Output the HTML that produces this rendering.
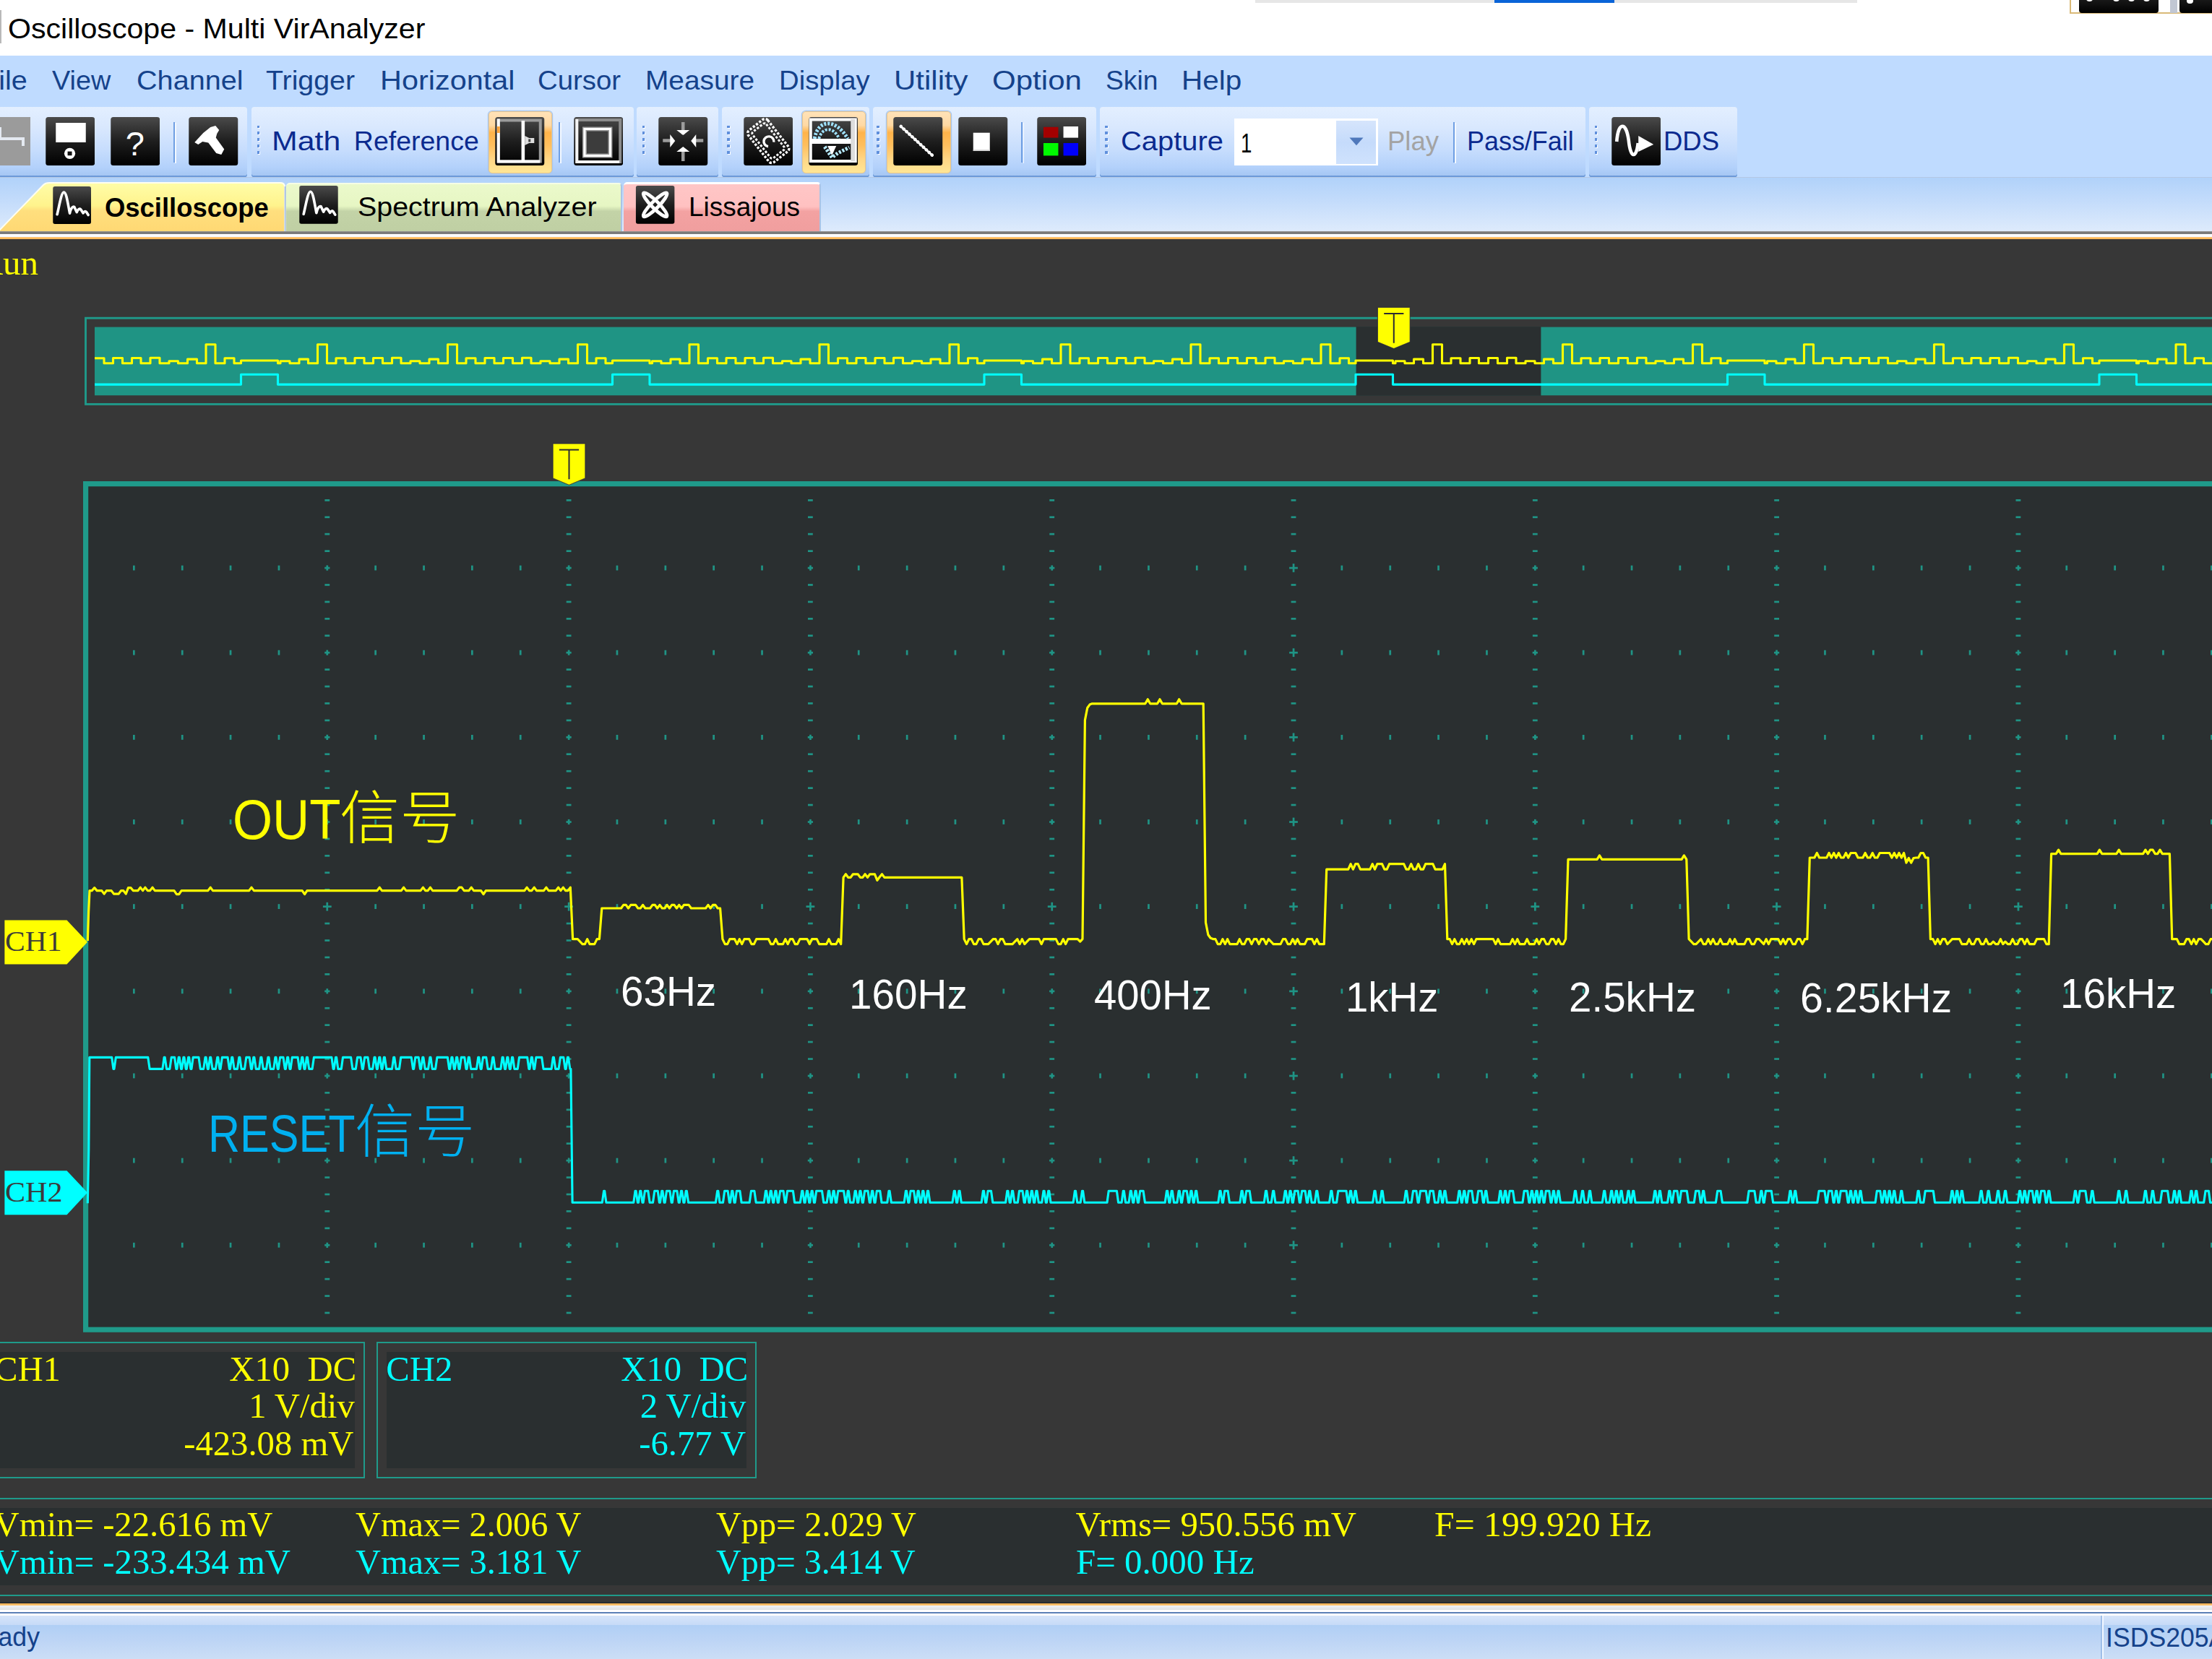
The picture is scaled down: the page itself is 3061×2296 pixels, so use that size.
<!DOCTYPE html>
<html lang="en"><head><meta charset="utf-8"><title>Oscilloscope - Multi VirAnalyzer</title>
<style>
html,body{margin:0;padding:0}
body{width:3061px;height:2296px;overflow:hidden;background:#373737;position:relative}
#app{position:absolute;left:0;top:0;width:3061px;height:2296px;overflow:hidden}
#app div,#app svg.ic{position:absolute}
.t{position:absolute;white-space:pre;line-height:1;transform-origin:0 0;display:block}
.ts{font-family:"Liberation Sans","Noto Sans CJK SC",sans-serif}
.tf{font-family:"Liberation Serif","Noto Serif CJK SC",serif}
.tc{font-family:"Liberation Sans","Noto Sans CJK SC",sans-serif}
.tg{border-radius:4px;background:linear-gradient(#e3efff,#d9e8fe 30%,#c7ddfd 62%,#b3d1fb 88%,#a5c6f3);box-shadow:0 2.6px 0 #6c9ad9}
.hot{border-radius:5px;border:1.6px solid #e8c58d;box-sizing:border-box;
 background:linear-gradient(#ffe2b8,#ffd9a3 22%,#ffb34a 34%,#ffbf5e 55%,#ffd685 78%,#ffe695);box-shadow:0 0 0 1.2px #a9c7ee}
</style></head>
<body><div id="app">
<div class="view" style="left:0.0px;top:331.4px;width:3061.0px;height:1888.0px;background:#373737"></div>
<svg class="ic" style="left:0;top:0" width="3061" height="2296" viewBox="0 0 3061 2296"><defs><linearGradient id="ig" x1="0" y1="0" x2="0" y2="1"><stop offset="0" stop-color="#4a4a4a"/><stop offset=".5" stop-color="#1e1e1e"/><stop offset="1" stop-color="#000"/></linearGradient></defs><rect x="118.5" y="440.2" width="3000" height="119.2" fill="none" stroke="#1f9a8a" stroke-width="2.9"/><rect x="131" y="452.6" width="3000" height="94.6" fill="#1f9484"/><rect x="1876.6" y="452.1" width="255.8" height="95.6" fill="#2a2f30"/><path d="M131.0 495.8L144.0 495.8L144.0 502.8L156.5 502.8L156.5 495.5L169.5 495.5L169.5 502.8L182.5 502.8L182.5 495.5L195.0 495.5L195.0 502.8L208.0 502.8L208.0 495.3L221.0 495.3L221.0 502.8L234.0 502.8L234.0 499.8L246.5 499.8L246.5 502.8L259.5 502.8L259.5 497.1L272.5 497.1L272.5 502.8L285.0 502.8L285.0 476.8L298.0 476.8L298.0 502.8L311.0 502.8L311.0 495.8L324.0 495.8L324.0 502.8L333.5 502.8L333.5 499.0L384.5 499.0L384.5 502.8L388.0 502.8L388.0 499.8L401.0 499.8L401.0 502.8L414.0 502.8L414.0 497.1L426.5 497.1L426.5 502.8L439.5 502.8L439.5 476.8L452.5 476.8L452.5 502.8L465.0 502.8L465.0 495.8L478.0 495.8L478.0 502.8L491.0 502.8L491.0 495.5L504.0 495.5L504.0 502.8L516.5 502.8L516.5 495.5L529.5 495.5L529.5 502.8L542.5 502.8L542.5 495.3L555.0 495.3L555.0 502.8L568.0 502.8L568.0 499.8L581.0 499.8L581.0 502.8L594.0 502.8L594.0 497.1L606.5 497.1L606.5 502.8L619.5 502.8L619.5 476.8L632.5 476.8L632.5 502.8L645.0 502.8L645.0 495.8L658.0 495.8L658.0 502.8L671.0 502.8L671.0 495.5L684.0 495.5L684.0 502.8L696.5 502.8L696.5 495.5L709.5 495.5L709.5 502.8L722.5 502.8L722.5 495.3L735.0 495.3L735.0 502.8L748.0 502.8L748.0 499.8L761.0 499.8L761.0 502.8L774.0 502.8L774.0 497.1L786.5 497.1L786.5 502.8L799.5 502.8L799.5 476.8L812.5 476.8L812.5 502.8L825.0 502.8L825.0 495.8L838.0 495.8L838.0 502.8L847.5 502.8L847.5 499.0L899.0 499.0L899.0 502.8L902.5 502.8L902.5 499.8L915.0 499.8L915.0 502.8L928.0 502.8L928.0 497.1L941.0 497.1L941.0 502.8L954.0 502.8L954.0 476.8L966.5 476.8L966.5 502.8L979.5 502.8L979.5 495.8L992.5 495.8L992.5 502.8L1005.0 502.8L1005.0 495.5L1018.0 495.5L1018.0 502.8L1031.0 502.8L1031.0 495.5L1044.0 495.5L1044.0 502.8L1056.5 502.8L1056.5 495.3L1069.5 495.3L1069.5 502.8L1082.5 502.8L1082.5 499.8L1095.0 499.8L1095.0 502.8L1108.0 502.8L1108.0 497.1L1121.0 497.1L1121.0 502.8L1134.0 502.8L1134.0 476.8L1146.5 476.8L1146.5 502.8L1159.5 502.8L1159.5 495.8L1172.5 495.8L1172.5 502.8L1185.0 502.8L1185.0 495.5L1198.0 495.5L1198.0 502.8L1211.0 502.8L1211.0 495.5L1224.0 495.5L1224.0 502.8L1236.5 502.8L1236.5 495.3L1249.5 495.3L1249.5 502.8L1262.5 502.8L1262.5 499.8L1275.5 499.8L1275.5 502.8L1288.0 502.8L1288.0 497.1L1301.0 497.1L1301.0 502.8L1314.0 502.8L1314.0 476.8L1326.5 476.8L1326.5 502.8L1339.5 502.8L1339.5 495.8L1352.5 495.8L1352.5 502.8L1362.0 502.8L1362.0 499.0L1413.5 499.0L1413.5 502.8L1416.5 502.8L1416.5 499.8L1429.5 499.8L1429.5 502.8L1442.5 502.8L1442.5 497.1L1455.5 497.1L1455.5 502.8L1468.0 502.8L1468.0 476.8L1481.0 476.8L1481.0 502.8L1494.0 502.8L1494.0 495.8L1506.5 495.8L1506.5 502.8L1519.5 502.8L1519.5 495.5L1532.5 495.5L1532.5 502.8L1545.5 502.8L1545.5 495.5L1558.0 495.5L1558.0 502.8L1571.0 502.8L1571.0 495.3L1584.0 495.3L1584.0 502.8L1596.5 502.8L1596.5 499.8L1609.5 499.8L1609.5 502.8L1622.5 502.8L1622.5 497.1L1635.5 497.1L1635.5 502.8L1648.0 502.8L1648.0 476.8L1661.0 476.8L1661.0 502.8L1674.0 502.8L1674.0 495.8L1686.5 495.8L1686.5 502.8L1699.5 502.8L1699.5 495.5L1712.5 495.5L1712.5 502.8L1725.5 502.8L1725.5 495.5L1738.0 495.5L1738.0 502.8L1751.0 502.8L1751.0 495.3L1764.0 495.3L1764.0 502.8L1776.5 502.8L1776.5 499.8L1789.5 499.8L1789.5 502.8L1802.5 502.8L1802.5 497.1L1815.5 497.1L1815.5 502.8L1828.0 502.8L1828.0 476.8L1841.0 476.8L1841.0 502.8L1854.0 502.8L1854.0 495.8L1866.5 495.8L1866.5 502.8L1876.0 502.8L1876.0 499.0L1927.5 499.0L1927.5 502.8L1931.0 502.8L1931.0 499.8L1944.0 499.8L1944.0 502.8L1956.5 502.8L1956.5 497.1L1969.5 497.1L1969.5 502.8L1982.5 502.8L1982.5 476.8L1995.5 476.8L1995.5 502.8L2008.0 502.8L2008.0 495.8L2021.0 495.8L2021.0 502.8L2034.0 502.8L2034.0 495.5L2046.5 495.5L2046.5 502.8L2059.5 502.8L2059.5 495.5L2072.5 495.5L2072.5 502.8L2085.5 502.8L2085.5 495.3L2098.0 495.3L2098.0 502.8L2111.0 502.8L2111.0 499.8L2124.0 499.8L2124.0 502.8L2136.5 502.8L2136.5 497.1L2149.5 497.1L2149.5 502.8L2162.5 502.8L2162.5 476.8L2175.5 476.8L2175.5 502.8L2188.0 502.8L2188.0 495.8L2201.0 495.8L2201.0 502.8L2214.0 502.8L2214.0 495.5L2226.5 495.5L2226.5 502.8L2239.5 502.8L2239.5 495.5L2252.5 495.5L2252.5 502.8L2265.5 502.8L2265.5 495.3L2278.0 495.3L2278.0 502.8L2291.0 502.8L2291.0 499.8L2304.0 499.8L2304.0 502.8L2316.5 502.8L2316.5 497.1L2329.5 497.1L2329.5 502.8L2342.5 502.8L2342.5 476.8L2355.5 476.8L2355.5 502.8L2368.0 502.8L2368.0 495.8L2381.0 495.8L2381.0 502.8L2390.5 502.8L2390.5 499.0L2442.0 499.0L2442.0 502.8L2445.5 502.8L2445.5 499.8L2458.0 499.8L2458.0 502.8L2471.0 502.8L2471.0 497.1L2484.0 497.1L2484.0 502.8L2496.5 502.8L2496.5 476.8L2509.5 476.8L2509.5 502.8L2522.5 502.8L2522.5 495.8L2535.5 495.8L2535.5 502.8L2548.0 502.8L2548.0 495.5L2561.0 495.5L2561.0 502.8L2574.0 502.8L2574.0 495.5L2586.5 495.5L2586.5 502.8L2599.5 502.8L2599.5 495.3L2612.5 495.3L2612.5 502.8L2625.5 502.8L2625.5 499.8L2638.0 499.8L2638.0 502.8L2651.0 502.8L2651.0 497.1L2664.0 497.1L2664.0 502.8L2676.5 502.8L2676.5 476.8L2689.5 476.8L2689.5 502.8L2702.5 502.8L2702.5 495.8L2715.5 495.8L2715.5 502.8L2728.0 502.8L2728.0 495.5L2741.0 495.5L2741.0 502.8L2754.0 502.8L2754.0 495.5L2766.5 495.5L2766.5 502.8L2779.5 502.8L2779.5 495.3L2792.5 495.3L2792.5 502.8L2805.5 502.8L2805.5 499.8L2818.0 499.8L2818.0 502.8L2831.0 502.8L2831.0 497.1L2844.0 497.1L2844.0 502.8L2856.5 502.8L2856.5 476.8L2869.5 476.8L2869.5 502.8L2882.5 502.8L2882.5 495.8L2895.5 495.8L2895.5 502.8L2905.0 502.8L2905.0 499.0L2956.5 499.0L2956.5 502.8L2959.5 502.8L2959.5 499.8L2972.5 499.8L2972.5 502.8L2985.5 502.8L2985.5 497.1L2998.0 497.1L2998.0 502.8L3011.0 502.8L3011.0 476.8L3024.0 476.8L3024.0 502.8L3037.0 502.8L3037.0 495.8L3049.5 495.8L3049.5 502.8L3062.5 502.8L3062.5 495.5L3065.0 495.5" fill="none" stroke="#ffff00" stroke-width="3.1" stroke-linejoin="round"/><path d="M131.0 532.1L333.5 532.1L333.5 518.2L384.5 518.2L384.5 532.1L847.5 532.1L847.5 518.2L899.0 518.2L899.0 532.1L1362.0 532.1L1362.0 518.2L1413.5 518.2L1413.5 532.1L1876.0 532.1L1876.0 518.2L1927.5 518.2L1927.5 532.1L2390.5 532.1L2390.5 518.2L2442.0 518.2L2442.0 532.1L2905.0 532.1L2905.0 518.2L2956.5 518.2L2956.5 532.1L3065.0 532.1" fill="none" stroke="#00ffff" stroke-width="3.1" stroke-linejoin="round"/><path d="M1906.4 425.3H1951.2V473.3L1928.8 482.6L1906.4 473.3Z" fill="#ffff00" stroke="#26263c" stroke-width="1.2" stroke-opacity=".75"/><path d="M1915.2 433.9H1942.4M1928.8 433.9V474.7" stroke="#2b2b33" stroke-width="2.0" fill="none"/><rect x="118.6" y="669.6" width="3000" height="1170.6" fill="#2a2f30" stroke="#1f9a8a" stroke-width="7.2"/><g fill="#1f9485"><rect x="449.4" y="691.0" width="6.8" height="2.7"/><rect x="449.4" y="714.4" width="6.8" height="2.7"/><rect x="449.4" y="737.8" width="6.8" height="2.7"/><rect x="449.4" y="761.3" width="6.8" height="2.7"/><rect x="449.4" y="808.1" width="6.8" height="2.7"/><rect x="449.4" y="831.6" width="6.8" height="2.7"/><rect x="449.4" y="855.0" width="6.8" height="2.7"/><rect x="449.4" y="878.4" width="6.8" height="2.7"/><rect x="449.4" y="925.3" width="6.8" height="2.7"/><rect x="449.4" y="948.7" width="6.8" height="2.7"/><rect x="449.4" y="972.1" width="6.8" height="2.7"/><rect x="449.4" y="995.6" width="6.8" height="2.7"/><rect x="449.4" y="1042.4" width="6.8" height="2.7"/><rect x="449.4" y="1065.9" width="6.8" height="2.7"/><rect x="449.4" y="1089.3" width="6.8" height="2.7"/><rect x="449.4" y="1112.7" width="6.8" height="2.7"/><rect x="449.4" y="1159.6" width="6.8" height="2.7"/><rect x="449.4" y="1183.0" width="6.8" height="2.7"/><rect x="449.4" y="1206.4" width="6.8" height="2.7"/><rect x="449.4" y="1229.9" width="6.8" height="2.7"/><rect x="449.4" y="1276.7" width="6.8" height="2.7"/><rect x="449.4" y="1300.2" width="6.8" height="2.7"/><rect x="449.4" y="1323.6" width="6.8" height="2.7"/><rect x="449.4" y="1347.0" width="6.8" height="2.7"/><rect x="449.4" y="1393.9" width="6.8" height="2.7"/><rect x="449.4" y="1417.3" width="6.8" height="2.7"/><rect x="449.4" y="1440.7" width="6.8" height="2.7"/><rect x="449.4" y="1464.2" width="6.8" height="2.7"/><rect x="449.4" y="1511.0" width="6.8" height="2.7"/><rect x="449.4" y="1534.5" width="6.8" height="2.7"/><rect x="449.4" y="1557.9" width="6.8" height="2.7"/><rect x="449.4" y="1581.3" width="6.8" height="2.7"/><rect x="449.4" y="1628.2" width="6.8" height="2.7"/><rect x="449.4" y="1651.6" width="6.8" height="2.7"/><rect x="449.4" y="1675.0" width="6.8" height="2.7"/><rect x="449.4" y="1698.5" width="6.8" height="2.7"/><rect x="449.4" y="1745.3" width="6.8" height="2.7"/><rect x="449.4" y="1768.8" width="6.8" height="2.7"/><rect x="449.4" y="1792.2" width="6.8" height="2.7"/><rect x="449.4" y="1815.6" width="6.8" height="2.7"/><rect x="783.7" y="691.0" width="6.8" height="2.7"/><rect x="783.7" y="714.4" width="6.8" height="2.7"/><rect x="783.7" y="737.8" width="6.8" height="2.7"/><rect x="783.7" y="761.3" width="6.8" height="2.7"/><rect x="783.7" y="808.1" width="6.8" height="2.7"/><rect x="783.7" y="831.6" width="6.8" height="2.7"/><rect x="783.7" y="855.0" width="6.8" height="2.7"/><rect x="783.7" y="878.4" width="6.8" height="2.7"/><rect x="783.7" y="925.3" width="6.8" height="2.7"/><rect x="783.7" y="948.7" width="6.8" height="2.7"/><rect x="783.7" y="972.1" width="6.8" height="2.7"/><rect x="783.7" y="995.6" width="6.8" height="2.7"/><rect x="783.7" y="1042.4" width="6.8" height="2.7"/><rect x="783.7" y="1065.9" width="6.8" height="2.7"/><rect x="783.7" y="1089.3" width="6.8" height="2.7"/><rect x="783.7" y="1112.7" width="6.8" height="2.7"/><rect x="783.7" y="1159.6" width="6.8" height="2.7"/><rect x="783.7" y="1183.0" width="6.8" height="2.7"/><rect x="783.7" y="1206.4" width="6.8" height="2.7"/><rect x="783.7" y="1229.9" width="6.8" height="2.7"/><rect x="783.7" y="1276.7" width="6.8" height="2.7"/><rect x="783.7" y="1300.2" width="6.8" height="2.7"/><rect x="783.7" y="1323.6" width="6.8" height="2.7"/><rect x="783.7" y="1347.0" width="6.8" height="2.7"/><rect x="783.7" y="1393.9" width="6.8" height="2.7"/><rect x="783.7" y="1417.3" width="6.8" height="2.7"/><rect x="783.7" y="1440.7" width="6.8" height="2.7"/><rect x="783.7" y="1464.2" width="6.8" height="2.7"/><rect x="783.7" y="1511.0" width="6.8" height="2.7"/><rect x="783.7" y="1534.5" width="6.8" height="2.7"/><rect x="783.7" y="1557.9" width="6.8" height="2.7"/><rect x="783.7" y="1581.3" width="6.8" height="2.7"/><rect x="783.7" y="1628.2" width="6.8" height="2.7"/><rect x="783.7" y="1651.6" width="6.8" height="2.7"/><rect x="783.7" y="1675.0" width="6.8" height="2.7"/><rect x="783.7" y="1698.5" width="6.8" height="2.7"/><rect x="783.7" y="1745.3" width="6.8" height="2.7"/><rect x="783.7" y="1768.8" width="6.8" height="2.7"/><rect x="783.7" y="1792.2" width="6.8" height="2.7"/><rect x="783.7" y="1815.6" width="6.8" height="2.7"/><rect x="1118.0" y="691.0" width="6.8" height="2.7"/><rect x="1118.0" y="714.4" width="6.8" height="2.7"/><rect x="1118.0" y="737.8" width="6.8" height="2.7"/><rect x="1118.0" y="761.3" width="6.8" height="2.7"/><rect x="1118.0" y="808.1" width="6.8" height="2.7"/><rect x="1118.0" y="831.6" width="6.8" height="2.7"/><rect x="1118.0" y="855.0" width="6.8" height="2.7"/><rect x="1118.0" y="878.4" width="6.8" height="2.7"/><rect x="1118.0" y="925.3" width="6.8" height="2.7"/><rect x="1118.0" y="948.7" width="6.8" height="2.7"/><rect x="1118.0" y="972.1" width="6.8" height="2.7"/><rect x="1118.0" y="995.6" width="6.8" height="2.7"/><rect x="1118.0" y="1042.4" width="6.8" height="2.7"/><rect x="1118.0" y="1065.9" width="6.8" height="2.7"/><rect x="1118.0" y="1089.3" width="6.8" height="2.7"/><rect x="1118.0" y="1112.7" width="6.8" height="2.7"/><rect x="1118.0" y="1159.6" width="6.8" height="2.7"/><rect x="1118.0" y="1183.0" width="6.8" height="2.7"/><rect x="1118.0" y="1206.4" width="6.8" height="2.7"/><rect x="1118.0" y="1229.9" width="6.8" height="2.7"/><rect x="1118.0" y="1276.7" width="6.8" height="2.7"/><rect x="1118.0" y="1300.2" width="6.8" height="2.7"/><rect x="1118.0" y="1323.6" width="6.8" height="2.7"/><rect x="1118.0" y="1347.0" width="6.8" height="2.7"/><rect x="1118.0" y="1393.9" width="6.8" height="2.7"/><rect x="1118.0" y="1417.3" width="6.8" height="2.7"/><rect x="1118.0" y="1440.7" width="6.8" height="2.7"/><rect x="1118.0" y="1464.2" width="6.8" height="2.7"/><rect x="1118.0" y="1511.0" width="6.8" height="2.7"/><rect x="1118.0" y="1534.5" width="6.8" height="2.7"/><rect x="1118.0" y="1557.9" width="6.8" height="2.7"/><rect x="1118.0" y="1581.3" width="6.8" height="2.7"/><rect x="1118.0" y="1628.2" width="6.8" height="2.7"/><rect x="1118.0" y="1651.6" width="6.8" height="2.7"/><rect x="1118.0" y="1675.0" width="6.8" height="2.7"/><rect x="1118.0" y="1698.5" width="6.8" height="2.7"/><rect x="1118.0" y="1745.3" width="6.8" height="2.7"/><rect x="1118.0" y="1768.8" width="6.8" height="2.7"/><rect x="1118.0" y="1792.2" width="6.8" height="2.7"/><rect x="1118.0" y="1815.6" width="6.8" height="2.7"/><rect x="1452.3" y="691.0" width="6.8" height="2.7"/><rect x="1452.3" y="714.4" width="6.8" height="2.7"/><rect x="1452.3" y="737.8" width="6.8" height="2.7"/><rect x="1452.3" y="761.3" width="6.8" height="2.7"/><rect x="1452.3" y="808.1" width="6.8" height="2.7"/><rect x="1452.3" y="831.6" width="6.8" height="2.7"/><rect x="1452.3" y="855.0" width="6.8" height="2.7"/><rect x="1452.3" y="878.4" width="6.8" height="2.7"/><rect x="1452.3" y="925.3" width="6.8" height="2.7"/><rect x="1452.3" y="948.7" width="6.8" height="2.7"/><rect x="1452.3" y="972.1" width="6.8" height="2.7"/><rect x="1452.3" y="995.6" width="6.8" height="2.7"/><rect x="1452.3" y="1042.4" width="6.8" height="2.7"/><rect x="1452.3" y="1065.9" width="6.8" height="2.7"/><rect x="1452.3" y="1089.3" width="6.8" height="2.7"/><rect x="1452.3" y="1112.7" width="6.8" height="2.7"/><rect x="1452.3" y="1159.6" width="6.8" height="2.7"/><rect x="1452.3" y="1183.0" width="6.8" height="2.7"/><rect x="1452.3" y="1206.4" width="6.8" height="2.7"/><rect x="1452.3" y="1229.9" width="6.8" height="2.7"/><rect x="1452.3" y="1276.7" width="6.8" height="2.7"/><rect x="1452.3" y="1300.2" width="6.8" height="2.7"/><rect x="1452.3" y="1323.6" width="6.8" height="2.7"/><rect x="1452.3" y="1347.0" width="6.8" height="2.7"/><rect x="1452.3" y="1393.9" width="6.8" height="2.7"/><rect x="1452.3" y="1417.3" width="6.8" height="2.7"/><rect x="1452.3" y="1440.7" width="6.8" height="2.7"/><rect x="1452.3" y="1464.2" width="6.8" height="2.7"/><rect x="1452.3" y="1511.0" width="6.8" height="2.7"/><rect x="1452.3" y="1534.5" width="6.8" height="2.7"/><rect x="1452.3" y="1557.9" width="6.8" height="2.7"/><rect x="1452.3" y="1581.3" width="6.8" height="2.7"/><rect x="1452.3" y="1628.2" width="6.8" height="2.7"/><rect x="1452.3" y="1651.6" width="6.8" height="2.7"/><rect x="1452.3" y="1675.0" width="6.8" height="2.7"/><rect x="1452.3" y="1698.5" width="6.8" height="2.7"/><rect x="1452.3" y="1745.3" width="6.8" height="2.7"/><rect x="1452.3" y="1768.8" width="6.8" height="2.7"/><rect x="1452.3" y="1792.2" width="6.8" height="2.7"/><rect x="1452.3" y="1815.6" width="6.8" height="2.7"/><rect x="1786.6" y="691.0" width="6.8" height="2.7"/><rect x="1786.6" y="714.4" width="6.8" height="2.7"/><rect x="1786.6" y="737.8" width="6.8" height="2.7"/><rect x="1786.6" y="761.3" width="6.8" height="2.7"/><rect x="1786.6" y="808.1" width="6.8" height="2.7"/><rect x="1786.6" y="831.6" width="6.8" height="2.7"/><rect x="1786.6" y="855.0" width="6.8" height="2.7"/><rect x="1786.6" y="878.4" width="6.8" height="2.7"/><rect x="1786.6" y="925.3" width="6.8" height="2.7"/><rect x="1786.6" y="948.7" width="6.8" height="2.7"/><rect x="1786.6" y="972.1" width="6.8" height="2.7"/><rect x="1786.6" y="995.6" width="6.8" height="2.7"/><rect x="1786.6" y="1042.4" width="6.8" height="2.7"/><rect x="1786.6" y="1065.9" width="6.8" height="2.7"/><rect x="1786.6" y="1089.3" width="6.8" height="2.7"/><rect x="1786.6" y="1112.7" width="6.8" height="2.7"/><rect x="1786.6" y="1159.6" width="6.8" height="2.7"/><rect x="1786.6" y="1183.0" width="6.8" height="2.7"/><rect x="1786.6" y="1206.4" width="6.8" height="2.7"/><rect x="1786.6" y="1229.9" width="6.8" height="2.7"/><rect x="1786.6" y="1276.7" width="6.8" height="2.7"/><rect x="1786.6" y="1300.2" width="6.8" height="2.7"/><rect x="1786.6" y="1323.6" width="6.8" height="2.7"/><rect x="1786.6" y="1347.0" width="6.8" height="2.7"/><rect x="1786.6" y="1393.9" width="6.8" height="2.7"/><rect x="1786.6" y="1417.3" width="6.8" height="2.7"/><rect x="1786.6" y="1440.7" width="6.8" height="2.7"/><rect x="1786.6" y="1464.2" width="6.8" height="2.7"/><rect x="1786.6" y="1511.0" width="6.8" height="2.7"/><rect x="1786.6" y="1534.5" width="6.8" height="2.7"/><rect x="1786.6" y="1557.9" width="6.8" height="2.7"/><rect x="1786.6" y="1581.3" width="6.8" height="2.7"/><rect x="1786.6" y="1628.2" width="6.8" height="2.7"/><rect x="1786.6" y="1651.6" width="6.8" height="2.7"/><rect x="1786.6" y="1675.0" width="6.8" height="2.7"/><rect x="1786.6" y="1698.5" width="6.8" height="2.7"/><rect x="1786.6" y="1745.3" width="6.8" height="2.7"/><rect x="1786.6" y="1768.8" width="6.8" height="2.7"/><rect x="1786.6" y="1792.2" width="6.8" height="2.7"/><rect x="1786.6" y="1815.6" width="6.8" height="2.7"/><rect x="2120.9" y="691.0" width="6.8" height="2.7"/><rect x="2120.9" y="714.4" width="6.8" height="2.7"/><rect x="2120.9" y="737.8" width="6.8" height="2.7"/><rect x="2120.9" y="761.3" width="6.8" height="2.7"/><rect x="2120.9" y="808.1" width="6.8" height="2.7"/><rect x="2120.9" y="831.6" width="6.8" height="2.7"/><rect x="2120.9" y="855.0" width="6.8" height="2.7"/><rect x="2120.9" y="878.4" width="6.8" height="2.7"/><rect x="2120.9" y="925.3" width="6.8" height="2.7"/><rect x="2120.9" y="948.7" width="6.8" height="2.7"/><rect x="2120.9" y="972.1" width="6.8" height="2.7"/><rect x="2120.9" y="995.6" width="6.8" height="2.7"/><rect x="2120.9" y="1042.4" width="6.8" height="2.7"/><rect x="2120.9" y="1065.9" width="6.8" height="2.7"/><rect x="2120.9" y="1089.3" width="6.8" height="2.7"/><rect x="2120.9" y="1112.7" width="6.8" height="2.7"/><rect x="2120.9" y="1159.6" width="6.8" height="2.7"/><rect x="2120.9" y="1183.0" width="6.8" height="2.7"/><rect x="2120.9" y="1206.4" width="6.8" height="2.7"/><rect x="2120.9" y="1229.9" width="6.8" height="2.7"/><rect x="2120.9" y="1276.7" width="6.8" height="2.7"/><rect x="2120.9" y="1300.2" width="6.8" height="2.7"/><rect x="2120.9" y="1323.6" width="6.8" height="2.7"/><rect x="2120.9" y="1347.0" width="6.8" height="2.7"/><rect x="2120.9" y="1393.9" width="6.8" height="2.7"/><rect x="2120.9" y="1417.3" width="6.8" height="2.7"/><rect x="2120.9" y="1440.7" width="6.8" height="2.7"/><rect x="2120.9" y="1464.2" width="6.8" height="2.7"/><rect x="2120.9" y="1511.0" width="6.8" height="2.7"/><rect x="2120.9" y="1534.5" width="6.8" height="2.7"/><rect x="2120.9" y="1557.9" width="6.8" height="2.7"/><rect x="2120.9" y="1581.3" width="6.8" height="2.7"/><rect x="2120.9" y="1628.2" width="6.8" height="2.7"/><rect x="2120.9" y="1651.6" width="6.8" height="2.7"/><rect x="2120.9" y="1675.0" width="6.8" height="2.7"/><rect x="2120.9" y="1698.5" width="6.8" height="2.7"/><rect x="2120.9" y="1745.3" width="6.8" height="2.7"/><rect x="2120.9" y="1768.8" width="6.8" height="2.7"/><rect x="2120.9" y="1792.2" width="6.8" height="2.7"/><rect x="2120.9" y="1815.6" width="6.8" height="2.7"/><rect x="2455.2" y="691.0" width="6.8" height="2.7"/><rect x="2455.2" y="714.4" width="6.8" height="2.7"/><rect x="2455.2" y="737.8" width="6.8" height="2.7"/><rect x="2455.2" y="761.3" width="6.8" height="2.7"/><rect x="2455.2" y="808.1" width="6.8" height="2.7"/><rect x="2455.2" y="831.6" width="6.8" height="2.7"/><rect x="2455.2" y="855.0" width="6.8" height="2.7"/><rect x="2455.2" y="878.4" width="6.8" height="2.7"/><rect x="2455.2" y="925.3" width="6.8" height="2.7"/><rect x="2455.2" y="948.7" width="6.8" height="2.7"/><rect x="2455.2" y="972.1" width="6.8" height="2.7"/><rect x="2455.2" y="995.6" width="6.8" height="2.7"/><rect x="2455.2" y="1042.4" width="6.8" height="2.7"/><rect x="2455.2" y="1065.9" width="6.8" height="2.7"/><rect x="2455.2" y="1089.3" width="6.8" height="2.7"/><rect x="2455.2" y="1112.7" width="6.8" height="2.7"/><rect x="2455.2" y="1159.6" width="6.8" height="2.7"/><rect x="2455.2" y="1183.0" width="6.8" height="2.7"/><rect x="2455.2" y="1206.4" width="6.8" height="2.7"/><rect x="2455.2" y="1229.9" width="6.8" height="2.7"/><rect x="2455.2" y="1276.7" width="6.8" height="2.7"/><rect x="2455.2" y="1300.2" width="6.8" height="2.7"/><rect x="2455.2" y="1323.6" width="6.8" height="2.7"/><rect x="2455.2" y="1347.0" width="6.8" height="2.7"/><rect x="2455.2" y="1393.9" width="6.8" height="2.7"/><rect x="2455.2" y="1417.3" width="6.8" height="2.7"/><rect x="2455.2" y="1440.7" width="6.8" height="2.7"/><rect x="2455.2" y="1464.2" width="6.8" height="2.7"/><rect x="2455.2" y="1511.0" width="6.8" height="2.7"/><rect x="2455.2" y="1534.5" width="6.8" height="2.7"/><rect x="2455.2" y="1557.9" width="6.8" height="2.7"/><rect x="2455.2" y="1581.3" width="6.8" height="2.7"/><rect x="2455.2" y="1628.2" width="6.8" height="2.7"/><rect x="2455.2" y="1651.6" width="6.8" height="2.7"/><rect x="2455.2" y="1675.0" width="6.8" height="2.7"/><rect x="2455.2" y="1698.5" width="6.8" height="2.7"/><rect x="2455.2" y="1745.3" width="6.8" height="2.7"/><rect x="2455.2" y="1768.8" width="6.8" height="2.7"/><rect x="2455.2" y="1792.2" width="6.8" height="2.7"/><rect x="2455.2" y="1815.6" width="6.8" height="2.7"/><rect x="2789.5" y="691.0" width="6.8" height="2.7"/><rect x="2789.5" y="714.4" width="6.8" height="2.7"/><rect x="2789.5" y="737.8" width="6.8" height="2.7"/><rect x="2789.5" y="761.3" width="6.8" height="2.7"/><rect x="2789.5" y="808.1" width="6.8" height="2.7"/><rect x="2789.5" y="831.6" width="6.8" height="2.7"/><rect x="2789.5" y="855.0" width="6.8" height="2.7"/><rect x="2789.5" y="878.4" width="6.8" height="2.7"/><rect x="2789.5" y="925.3" width="6.8" height="2.7"/><rect x="2789.5" y="948.7" width="6.8" height="2.7"/><rect x="2789.5" y="972.1" width="6.8" height="2.7"/><rect x="2789.5" y="995.6" width="6.8" height="2.7"/><rect x="2789.5" y="1042.4" width="6.8" height="2.7"/><rect x="2789.5" y="1065.9" width="6.8" height="2.7"/><rect x="2789.5" y="1089.3" width="6.8" height="2.7"/><rect x="2789.5" y="1112.7" width="6.8" height="2.7"/><rect x="2789.5" y="1159.6" width="6.8" height="2.7"/><rect x="2789.5" y="1183.0" width="6.8" height="2.7"/><rect x="2789.5" y="1206.4" width="6.8" height="2.7"/><rect x="2789.5" y="1229.9" width="6.8" height="2.7"/><rect x="2789.5" y="1276.7" width="6.8" height="2.7"/><rect x="2789.5" y="1300.2" width="6.8" height="2.7"/><rect x="2789.5" y="1323.6" width="6.8" height="2.7"/><rect x="2789.5" y="1347.0" width="6.8" height="2.7"/><rect x="2789.5" y="1393.9" width="6.8" height="2.7"/><rect x="2789.5" y="1417.3" width="6.8" height="2.7"/><rect x="2789.5" y="1440.7" width="6.8" height="2.7"/><rect x="2789.5" y="1464.2" width="6.8" height="2.7"/><rect x="2789.5" y="1511.0" width="6.8" height="2.7"/><rect x="2789.5" y="1534.5" width="6.8" height="2.7"/><rect x="2789.5" y="1557.9" width="6.8" height="2.7"/><rect x="2789.5" y="1581.3" width="6.8" height="2.7"/><rect x="2789.5" y="1628.2" width="6.8" height="2.7"/><rect x="2789.5" y="1651.6" width="6.8" height="2.7"/><rect x="2789.5" y="1675.0" width="6.8" height="2.7"/><rect x="2789.5" y="1698.5" width="6.8" height="2.7"/><rect x="2789.5" y="1745.3" width="6.8" height="2.7"/><rect x="2789.5" y="1768.8" width="6.8" height="2.7"/><rect x="2789.5" y="1792.2" width="6.8" height="2.7"/><rect x="2789.5" y="1815.6" width="6.8" height="2.7"/><rect x="184.0" y="782.6" width="2.7" height="6.8"/><rect x="250.9" y="782.6" width="2.7" height="6.8"/><rect x="317.7" y="782.6" width="2.7" height="6.8"/><rect x="384.6" y="782.6" width="2.7" height="6.8"/><rect x="449.2" y="784.7" width="7.2" height="2.7"/><rect x="451.4" y="782.4" width="2.7" height="7.2"/><rect x="518.3" y="782.6" width="2.7" height="6.8"/><rect x="585.2" y="782.6" width="2.7" height="6.8"/><rect x="652.0" y="782.6" width="2.7" height="6.8"/><rect x="718.9" y="782.6" width="2.7" height="6.8"/><rect x="783.5" y="784.7" width="7.2" height="2.7"/><rect x="785.8" y="782.4" width="2.7" height="7.2"/><rect x="852.6" y="782.6" width="2.7" height="6.8"/><rect x="919.5" y="782.6" width="2.7" height="6.8"/><rect x="986.3" y="782.6" width="2.7" height="6.8"/><rect x="1053.2" y="782.6" width="2.7" height="6.8"/><rect x="1117.8" y="784.7" width="7.2" height="2.7"/><rect x="1120.1" y="782.4" width="2.7" height="7.2"/><rect x="1186.9" y="782.6" width="2.7" height="6.8"/><rect x="1253.8" y="782.6" width="2.7" height="6.8"/><rect x="1320.6" y="782.6" width="2.7" height="6.8"/><rect x="1387.5" y="782.6" width="2.7" height="6.8"/><rect x="1452.1" y="784.7" width="7.2" height="2.7"/><rect x="1454.4" y="782.4" width="2.7" height="7.2"/><rect x="1521.2" y="782.6" width="2.7" height="6.8"/><rect x="1588.1" y="782.6" width="2.7" height="6.8"/><rect x="1654.9" y="782.6" width="2.7" height="6.8"/><rect x="1721.8" y="782.6" width="2.7" height="6.8"/><rect x="1784.1" y="784.7" width="11.8" height="2.7"/><rect x="1788.7" y="780.1" width="2.7" height="11.8"/><rect x="1855.5" y="782.6" width="2.7" height="6.8"/><rect x="1922.4" y="782.6" width="2.7" height="6.8"/><rect x="1989.2" y="782.6" width="2.7" height="6.8"/><rect x="2056.1" y="782.6" width="2.7" height="6.8"/><rect x="2120.7" y="784.7" width="7.2" height="2.7"/><rect x="2123.0" y="782.4" width="2.7" height="7.2"/><rect x="2189.8" y="782.6" width="2.7" height="6.8"/><rect x="2256.7" y="782.6" width="2.7" height="6.8"/><rect x="2323.5" y="782.6" width="2.7" height="6.8"/><rect x="2390.4" y="782.6" width="2.7" height="6.8"/><rect x="2455.0" y="784.7" width="7.2" height="2.7"/><rect x="2457.2" y="782.4" width="2.7" height="7.2"/><rect x="2524.1" y="782.6" width="2.7" height="6.8"/><rect x="2591.0" y="782.6" width="2.7" height="6.8"/><rect x="2657.8" y="782.6" width="2.7" height="6.8"/><rect x="2724.7" y="782.6" width="2.7" height="6.8"/><rect x="2789.3" y="784.7" width="7.2" height="2.7"/><rect x="2791.6" y="782.4" width="2.7" height="7.2"/><rect x="2858.4" y="782.6" width="2.7" height="6.8"/><rect x="2925.3" y="782.6" width="2.7" height="6.8"/><rect x="2992.1" y="782.6" width="2.7" height="6.8"/><rect x="3059.0" y="782.6" width="2.7" height="6.8"/><rect x="184.0" y="899.8" width="2.7" height="6.8"/><rect x="250.9" y="899.8" width="2.7" height="6.8"/><rect x="317.7" y="899.8" width="2.7" height="6.8"/><rect x="384.6" y="899.8" width="2.7" height="6.8"/><rect x="449.2" y="901.9" width="7.2" height="2.7"/><rect x="451.4" y="899.6" width="2.7" height="7.2"/><rect x="518.3" y="899.8" width="2.7" height="6.8"/><rect x="585.2" y="899.8" width="2.7" height="6.8"/><rect x="652.0" y="899.8" width="2.7" height="6.8"/><rect x="718.9" y="899.8" width="2.7" height="6.8"/><rect x="783.5" y="901.9" width="7.2" height="2.7"/><rect x="785.8" y="899.6" width="2.7" height="7.2"/><rect x="852.6" y="899.8" width="2.7" height="6.8"/><rect x="919.5" y="899.8" width="2.7" height="6.8"/><rect x="986.3" y="899.8" width="2.7" height="6.8"/><rect x="1053.2" y="899.8" width="2.7" height="6.8"/><rect x="1117.8" y="901.9" width="7.2" height="2.7"/><rect x="1120.1" y="899.6" width="2.7" height="7.2"/><rect x="1186.9" y="899.8" width="2.7" height="6.8"/><rect x="1253.8" y="899.8" width="2.7" height="6.8"/><rect x="1320.6" y="899.8" width="2.7" height="6.8"/><rect x="1387.5" y="899.8" width="2.7" height="6.8"/><rect x="1452.1" y="901.9" width="7.2" height="2.7"/><rect x="1454.4" y="899.6" width="2.7" height="7.2"/><rect x="1521.2" y="899.8" width="2.7" height="6.8"/><rect x="1588.1" y="899.8" width="2.7" height="6.8"/><rect x="1654.9" y="899.8" width="2.7" height="6.8"/><rect x="1721.8" y="899.8" width="2.7" height="6.8"/><rect x="1784.1" y="901.9" width="11.8" height="2.7"/><rect x="1788.7" y="897.3" width="2.7" height="11.8"/><rect x="1855.5" y="899.8" width="2.7" height="6.8"/><rect x="1922.4" y="899.8" width="2.7" height="6.8"/><rect x="1989.2" y="899.8" width="2.7" height="6.8"/><rect x="2056.1" y="899.8" width="2.7" height="6.8"/><rect x="2120.7" y="901.9" width="7.2" height="2.7"/><rect x="2123.0" y="899.6" width="2.7" height="7.2"/><rect x="2189.8" y="899.8" width="2.7" height="6.8"/><rect x="2256.7" y="899.8" width="2.7" height="6.8"/><rect x="2323.5" y="899.8" width="2.7" height="6.8"/><rect x="2390.4" y="899.8" width="2.7" height="6.8"/><rect x="2455.0" y="901.9" width="7.2" height="2.7"/><rect x="2457.2" y="899.6" width="2.7" height="7.2"/><rect x="2524.1" y="899.8" width="2.7" height="6.8"/><rect x="2591.0" y="899.8" width="2.7" height="6.8"/><rect x="2657.8" y="899.8" width="2.7" height="6.8"/><rect x="2724.7" y="899.8" width="2.7" height="6.8"/><rect x="2789.3" y="901.9" width="7.2" height="2.7"/><rect x="2791.6" y="899.6" width="2.7" height="7.2"/><rect x="2858.4" y="899.8" width="2.7" height="6.8"/><rect x="2925.3" y="899.8" width="2.7" height="6.8"/><rect x="2992.1" y="899.8" width="2.7" height="6.8"/><rect x="3059.0" y="899.8" width="2.7" height="6.8"/><rect x="184.0" y="1017.0" width="2.7" height="6.8"/><rect x="250.9" y="1017.0" width="2.7" height="6.8"/><rect x="317.7" y="1017.0" width="2.7" height="6.8"/><rect x="384.6" y="1017.0" width="2.7" height="6.8"/><rect x="449.2" y="1019.0" width="7.2" height="2.7"/><rect x="451.4" y="1016.8" width="2.7" height="7.2"/><rect x="518.3" y="1017.0" width="2.7" height="6.8"/><rect x="585.2" y="1017.0" width="2.7" height="6.8"/><rect x="652.0" y="1017.0" width="2.7" height="6.8"/><rect x="718.9" y="1017.0" width="2.7" height="6.8"/><rect x="783.5" y="1019.0" width="7.2" height="2.7"/><rect x="785.8" y="1016.8" width="2.7" height="7.2"/><rect x="852.6" y="1017.0" width="2.7" height="6.8"/><rect x="919.5" y="1017.0" width="2.7" height="6.8"/><rect x="986.3" y="1017.0" width="2.7" height="6.8"/><rect x="1053.2" y="1017.0" width="2.7" height="6.8"/><rect x="1117.8" y="1019.0" width="7.2" height="2.7"/><rect x="1120.1" y="1016.8" width="2.7" height="7.2"/><rect x="1186.9" y="1017.0" width="2.7" height="6.8"/><rect x="1253.8" y="1017.0" width="2.7" height="6.8"/><rect x="1320.6" y="1017.0" width="2.7" height="6.8"/><rect x="1387.5" y="1017.0" width="2.7" height="6.8"/><rect x="1452.1" y="1019.0" width="7.2" height="2.7"/><rect x="1454.4" y="1016.8" width="2.7" height="7.2"/><rect x="1521.2" y="1017.0" width="2.7" height="6.8"/><rect x="1588.1" y="1017.0" width="2.7" height="6.8"/><rect x="1654.9" y="1017.0" width="2.7" height="6.8"/><rect x="1721.8" y="1017.0" width="2.7" height="6.8"/><rect x="1784.1" y="1019.0" width="11.8" height="2.7"/><rect x="1788.7" y="1014.5" width="2.7" height="11.8"/><rect x="1855.5" y="1017.0" width="2.7" height="6.8"/><rect x="1922.4" y="1017.0" width="2.7" height="6.8"/><rect x="1989.2" y="1017.0" width="2.7" height="6.8"/><rect x="2056.1" y="1017.0" width="2.7" height="6.8"/><rect x="2120.7" y="1019.0" width="7.2" height="2.7"/><rect x="2123.0" y="1016.8" width="2.7" height="7.2"/><rect x="2189.8" y="1017.0" width="2.7" height="6.8"/><rect x="2256.7" y="1017.0" width="2.7" height="6.8"/><rect x="2323.5" y="1017.0" width="2.7" height="6.8"/><rect x="2390.4" y="1017.0" width="2.7" height="6.8"/><rect x="2455.0" y="1019.0" width="7.2" height="2.7"/><rect x="2457.2" y="1016.8" width="2.7" height="7.2"/><rect x="2524.1" y="1017.0" width="2.7" height="6.8"/><rect x="2591.0" y="1017.0" width="2.7" height="6.8"/><rect x="2657.8" y="1017.0" width="2.7" height="6.8"/><rect x="2724.7" y="1017.0" width="2.7" height="6.8"/><rect x="2789.3" y="1019.0" width="7.2" height="2.7"/><rect x="2791.6" y="1016.8" width="2.7" height="7.2"/><rect x="2858.4" y="1017.0" width="2.7" height="6.8"/><rect x="2925.3" y="1017.0" width="2.7" height="6.8"/><rect x="2992.1" y="1017.0" width="2.7" height="6.8"/><rect x="3059.0" y="1017.0" width="2.7" height="6.8"/><rect x="184.0" y="1134.1" width="2.7" height="6.8"/><rect x="250.9" y="1134.1" width="2.7" height="6.8"/><rect x="317.7" y="1134.1" width="2.7" height="6.8"/><rect x="384.6" y="1134.1" width="2.7" height="6.8"/><rect x="449.2" y="1136.2" width="7.2" height="2.7"/><rect x="451.4" y="1133.9" width="2.7" height="7.2"/><rect x="518.3" y="1134.1" width="2.7" height="6.8"/><rect x="585.2" y="1134.1" width="2.7" height="6.8"/><rect x="652.0" y="1134.1" width="2.7" height="6.8"/><rect x="718.9" y="1134.1" width="2.7" height="6.8"/><rect x="783.5" y="1136.2" width="7.2" height="2.7"/><rect x="785.8" y="1133.9" width="2.7" height="7.2"/><rect x="852.6" y="1134.1" width="2.7" height="6.8"/><rect x="919.5" y="1134.1" width="2.7" height="6.8"/><rect x="986.3" y="1134.1" width="2.7" height="6.8"/><rect x="1053.2" y="1134.1" width="2.7" height="6.8"/><rect x="1117.8" y="1136.2" width="7.2" height="2.7"/><rect x="1120.1" y="1133.9" width="2.7" height="7.2"/><rect x="1186.9" y="1134.1" width="2.7" height="6.8"/><rect x="1253.8" y="1134.1" width="2.7" height="6.8"/><rect x="1320.6" y="1134.1" width="2.7" height="6.8"/><rect x="1387.5" y="1134.1" width="2.7" height="6.8"/><rect x="1452.1" y="1136.2" width="7.2" height="2.7"/><rect x="1454.4" y="1133.9" width="2.7" height="7.2"/><rect x="1521.2" y="1134.1" width="2.7" height="6.8"/><rect x="1588.1" y="1134.1" width="2.7" height="6.8"/><rect x="1654.9" y="1134.1" width="2.7" height="6.8"/><rect x="1721.8" y="1134.1" width="2.7" height="6.8"/><rect x="1784.1" y="1136.2" width="11.8" height="2.7"/><rect x="1788.7" y="1131.6" width="2.7" height="11.8"/><rect x="1855.5" y="1134.1" width="2.7" height="6.8"/><rect x="1922.4" y="1134.1" width="2.7" height="6.8"/><rect x="1989.2" y="1134.1" width="2.7" height="6.8"/><rect x="2056.1" y="1134.1" width="2.7" height="6.8"/><rect x="2120.7" y="1136.2" width="7.2" height="2.7"/><rect x="2123.0" y="1133.9" width="2.7" height="7.2"/><rect x="2189.8" y="1134.1" width="2.7" height="6.8"/><rect x="2256.7" y="1134.1" width="2.7" height="6.8"/><rect x="2323.5" y="1134.1" width="2.7" height="6.8"/><rect x="2390.4" y="1134.1" width="2.7" height="6.8"/><rect x="2455.0" y="1136.2" width="7.2" height="2.7"/><rect x="2457.2" y="1133.9" width="2.7" height="7.2"/><rect x="2524.1" y="1134.1" width="2.7" height="6.8"/><rect x="2591.0" y="1134.1" width="2.7" height="6.8"/><rect x="2657.8" y="1134.1" width="2.7" height="6.8"/><rect x="2724.7" y="1134.1" width="2.7" height="6.8"/><rect x="2789.3" y="1136.2" width="7.2" height="2.7"/><rect x="2791.6" y="1133.9" width="2.7" height="7.2"/><rect x="2858.4" y="1134.1" width="2.7" height="6.8"/><rect x="2925.3" y="1134.1" width="2.7" height="6.8"/><rect x="2992.1" y="1134.1" width="2.7" height="6.8"/><rect x="3059.0" y="1134.1" width="2.7" height="6.8"/><rect x="184.0" y="1251.2" width="2.7" height="6.8"/><rect x="250.9" y="1251.2" width="2.7" height="6.8"/><rect x="317.7" y="1251.2" width="2.7" height="6.8"/><rect x="384.6" y="1251.2" width="2.7" height="6.8"/><rect x="446.9" y="1253.3" width="11.8" height="2.7"/><rect x="451.4" y="1248.8" width="2.7" height="11.8"/><rect x="518.3" y="1251.2" width="2.7" height="6.8"/><rect x="585.2" y="1251.2" width="2.7" height="6.8"/><rect x="652.0" y="1251.2" width="2.7" height="6.8"/><rect x="718.9" y="1251.2" width="2.7" height="6.8"/><rect x="781.2" y="1253.3" width="11.8" height="2.7"/><rect x="785.8" y="1248.8" width="2.7" height="11.8"/><rect x="852.6" y="1251.2" width="2.7" height="6.8"/><rect x="919.5" y="1251.2" width="2.7" height="6.8"/><rect x="986.3" y="1251.2" width="2.7" height="6.8"/><rect x="1053.2" y="1251.2" width="2.7" height="6.8"/><rect x="1115.5" y="1253.3" width="11.8" height="2.7"/><rect x="1120.1" y="1248.8" width="2.7" height="11.8"/><rect x="1186.9" y="1251.2" width="2.7" height="6.8"/><rect x="1253.8" y="1251.2" width="2.7" height="6.8"/><rect x="1320.6" y="1251.2" width="2.7" height="6.8"/><rect x="1387.5" y="1251.2" width="2.7" height="6.8"/><rect x="1449.8" y="1253.3" width="11.8" height="2.7"/><rect x="1454.4" y="1248.8" width="2.7" height="11.8"/><rect x="1521.2" y="1251.2" width="2.7" height="6.8"/><rect x="1588.1" y="1251.2" width="2.7" height="6.8"/><rect x="1654.9" y="1251.2" width="2.7" height="6.8"/><rect x="1721.8" y="1251.2" width="2.7" height="6.8"/><rect x="1784.1" y="1253.3" width="11.8" height="2.7"/><rect x="1788.7" y="1248.8" width="2.7" height="11.8"/><rect x="1855.5" y="1251.2" width="2.7" height="6.8"/><rect x="1922.4" y="1251.2" width="2.7" height="6.8"/><rect x="1989.2" y="1251.2" width="2.7" height="6.8"/><rect x="2056.1" y="1251.2" width="2.7" height="6.8"/><rect x="2118.4" y="1253.3" width="11.8" height="2.7"/><rect x="2123.0" y="1248.8" width="2.7" height="11.8"/><rect x="2189.8" y="1251.2" width="2.7" height="6.8"/><rect x="2256.7" y="1251.2" width="2.7" height="6.8"/><rect x="2323.5" y="1251.2" width="2.7" height="6.8"/><rect x="2390.4" y="1251.2" width="2.7" height="6.8"/><rect x="2452.7" y="1253.3" width="11.8" height="2.7"/><rect x="2457.2" y="1248.8" width="2.7" height="11.8"/><rect x="2524.1" y="1251.2" width="2.7" height="6.8"/><rect x="2591.0" y="1251.2" width="2.7" height="6.8"/><rect x="2657.8" y="1251.2" width="2.7" height="6.8"/><rect x="2724.7" y="1251.2" width="2.7" height="6.8"/><rect x="2787.0" y="1253.3" width="11.8" height="2.7"/><rect x="2791.6" y="1248.8" width="2.7" height="11.8"/><rect x="2858.4" y="1251.2" width="2.7" height="6.8"/><rect x="2925.3" y="1251.2" width="2.7" height="6.8"/><rect x="2992.1" y="1251.2" width="2.7" height="6.8"/><rect x="3059.0" y="1251.2" width="2.7" height="6.8"/><rect x="184.0" y="1368.4" width="2.7" height="6.8"/><rect x="250.9" y="1368.4" width="2.7" height="6.8"/><rect x="317.7" y="1368.4" width="2.7" height="6.8"/><rect x="384.6" y="1368.4" width="2.7" height="6.8"/><rect x="449.2" y="1370.5" width="7.2" height="2.7"/><rect x="451.4" y="1368.2" width="2.7" height="7.2"/><rect x="518.3" y="1368.4" width="2.7" height="6.8"/><rect x="585.2" y="1368.4" width="2.7" height="6.8"/><rect x="652.0" y="1368.4" width="2.7" height="6.8"/><rect x="718.9" y="1368.4" width="2.7" height="6.8"/><rect x="783.5" y="1370.5" width="7.2" height="2.7"/><rect x="785.8" y="1368.2" width="2.7" height="7.2"/><rect x="852.6" y="1368.4" width="2.7" height="6.8"/><rect x="919.5" y="1368.4" width="2.7" height="6.8"/><rect x="986.3" y="1368.4" width="2.7" height="6.8"/><rect x="1053.2" y="1368.4" width="2.7" height="6.8"/><rect x="1117.8" y="1370.5" width="7.2" height="2.7"/><rect x="1120.1" y="1368.2" width="2.7" height="7.2"/><rect x="1186.9" y="1368.4" width="2.7" height="6.8"/><rect x="1253.8" y="1368.4" width="2.7" height="6.8"/><rect x="1320.6" y="1368.4" width="2.7" height="6.8"/><rect x="1387.5" y="1368.4" width="2.7" height="6.8"/><rect x="1452.1" y="1370.5" width="7.2" height="2.7"/><rect x="1454.4" y="1368.2" width="2.7" height="7.2"/><rect x="1521.2" y="1368.4" width="2.7" height="6.8"/><rect x="1588.1" y="1368.4" width="2.7" height="6.8"/><rect x="1654.9" y="1368.4" width="2.7" height="6.8"/><rect x="1721.8" y="1368.4" width="2.7" height="6.8"/><rect x="1784.1" y="1370.5" width="11.8" height="2.7"/><rect x="1788.7" y="1365.9" width="2.7" height="11.8"/><rect x="1855.5" y="1368.4" width="2.7" height="6.8"/><rect x="1922.4" y="1368.4" width="2.7" height="6.8"/><rect x="1989.2" y="1368.4" width="2.7" height="6.8"/><rect x="2056.1" y="1368.4" width="2.7" height="6.8"/><rect x="2120.7" y="1370.5" width="7.2" height="2.7"/><rect x="2123.0" y="1368.2" width="2.7" height="7.2"/><rect x="2189.8" y="1368.4" width="2.7" height="6.8"/><rect x="2256.7" y="1368.4" width="2.7" height="6.8"/><rect x="2323.5" y="1368.4" width="2.7" height="6.8"/><rect x="2390.4" y="1368.4" width="2.7" height="6.8"/><rect x="2455.0" y="1370.5" width="7.2" height="2.7"/><rect x="2457.2" y="1368.2" width="2.7" height="7.2"/><rect x="2524.1" y="1368.4" width="2.7" height="6.8"/><rect x="2591.0" y="1368.4" width="2.7" height="6.8"/><rect x="2657.8" y="1368.4" width="2.7" height="6.8"/><rect x="2724.7" y="1368.4" width="2.7" height="6.8"/><rect x="2789.3" y="1370.5" width="7.2" height="2.7"/><rect x="2791.6" y="1368.2" width="2.7" height="7.2"/><rect x="2858.4" y="1368.4" width="2.7" height="6.8"/><rect x="2925.3" y="1368.4" width="2.7" height="6.8"/><rect x="2992.1" y="1368.4" width="2.7" height="6.8"/><rect x="3059.0" y="1368.4" width="2.7" height="6.8"/><rect x="184.0" y="1485.5" width="2.7" height="6.8"/><rect x="250.9" y="1485.5" width="2.7" height="6.8"/><rect x="317.7" y="1485.5" width="2.7" height="6.8"/><rect x="384.6" y="1485.5" width="2.7" height="6.8"/><rect x="449.2" y="1487.6" width="7.2" height="2.7"/><rect x="451.4" y="1485.4" width="2.7" height="7.2"/><rect x="518.3" y="1485.5" width="2.7" height="6.8"/><rect x="585.2" y="1485.5" width="2.7" height="6.8"/><rect x="652.0" y="1485.5" width="2.7" height="6.8"/><rect x="718.9" y="1485.5" width="2.7" height="6.8"/><rect x="783.5" y="1487.6" width="7.2" height="2.7"/><rect x="785.8" y="1485.4" width="2.7" height="7.2"/><rect x="852.6" y="1485.5" width="2.7" height="6.8"/><rect x="919.5" y="1485.5" width="2.7" height="6.8"/><rect x="986.3" y="1485.5" width="2.7" height="6.8"/><rect x="1053.2" y="1485.5" width="2.7" height="6.8"/><rect x="1117.8" y="1487.6" width="7.2" height="2.7"/><rect x="1120.1" y="1485.4" width="2.7" height="7.2"/><rect x="1186.9" y="1485.5" width="2.7" height="6.8"/><rect x="1253.8" y="1485.5" width="2.7" height="6.8"/><rect x="1320.6" y="1485.5" width="2.7" height="6.8"/><rect x="1387.5" y="1485.5" width="2.7" height="6.8"/><rect x="1452.1" y="1487.6" width="7.2" height="2.7"/><rect x="1454.4" y="1485.4" width="2.7" height="7.2"/><rect x="1521.2" y="1485.5" width="2.7" height="6.8"/><rect x="1588.1" y="1485.5" width="2.7" height="6.8"/><rect x="1654.9" y="1485.5" width="2.7" height="6.8"/><rect x="1721.8" y="1485.5" width="2.7" height="6.8"/><rect x="1784.1" y="1487.6" width="11.8" height="2.7"/><rect x="1788.7" y="1483.0" width="2.7" height="11.8"/><rect x="1855.5" y="1485.5" width="2.7" height="6.8"/><rect x="1922.4" y="1485.5" width="2.7" height="6.8"/><rect x="1989.2" y="1485.5" width="2.7" height="6.8"/><rect x="2056.1" y="1485.5" width="2.7" height="6.8"/><rect x="2120.7" y="1487.6" width="7.2" height="2.7"/><rect x="2123.0" y="1485.4" width="2.7" height="7.2"/><rect x="2189.8" y="1485.5" width="2.7" height="6.8"/><rect x="2256.7" y="1485.5" width="2.7" height="6.8"/><rect x="2323.5" y="1485.5" width="2.7" height="6.8"/><rect x="2390.4" y="1485.5" width="2.7" height="6.8"/><rect x="2455.0" y="1487.6" width="7.2" height="2.7"/><rect x="2457.2" y="1485.4" width="2.7" height="7.2"/><rect x="2524.1" y="1485.5" width="2.7" height="6.8"/><rect x="2591.0" y="1485.5" width="2.7" height="6.8"/><rect x="2657.8" y="1485.5" width="2.7" height="6.8"/><rect x="2724.7" y="1485.5" width="2.7" height="6.8"/><rect x="2789.3" y="1487.6" width="7.2" height="2.7"/><rect x="2791.6" y="1485.4" width="2.7" height="7.2"/><rect x="2858.4" y="1485.5" width="2.7" height="6.8"/><rect x="2925.3" y="1485.5" width="2.7" height="6.8"/><rect x="2992.1" y="1485.5" width="2.7" height="6.8"/><rect x="3059.0" y="1485.5" width="2.7" height="6.8"/><rect x="184.0" y="1602.7" width="2.7" height="6.8"/><rect x="250.9" y="1602.7" width="2.7" height="6.8"/><rect x="317.7" y="1602.7" width="2.7" height="6.8"/><rect x="384.6" y="1602.7" width="2.7" height="6.8"/><rect x="449.2" y="1604.8" width="7.2" height="2.7"/><rect x="451.4" y="1602.5" width="2.7" height="7.2"/><rect x="518.3" y="1602.7" width="2.7" height="6.8"/><rect x="585.2" y="1602.7" width="2.7" height="6.8"/><rect x="652.0" y="1602.7" width="2.7" height="6.8"/><rect x="718.9" y="1602.7" width="2.7" height="6.8"/><rect x="783.5" y="1604.8" width="7.2" height="2.7"/><rect x="785.8" y="1602.5" width="2.7" height="7.2"/><rect x="852.6" y="1602.7" width="2.7" height="6.8"/><rect x="919.5" y="1602.7" width="2.7" height="6.8"/><rect x="986.3" y="1602.7" width="2.7" height="6.8"/><rect x="1053.2" y="1602.7" width="2.7" height="6.8"/><rect x="1117.8" y="1604.8" width="7.2" height="2.7"/><rect x="1120.1" y="1602.5" width="2.7" height="7.2"/><rect x="1186.9" y="1602.7" width="2.7" height="6.8"/><rect x="1253.8" y="1602.7" width="2.7" height="6.8"/><rect x="1320.6" y="1602.7" width="2.7" height="6.8"/><rect x="1387.5" y="1602.7" width="2.7" height="6.8"/><rect x="1452.1" y="1604.8" width="7.2" height="2.7"/><rect x="1454.4" y="1602.5" width="2.7" height="7.2"/><rect x="1521.2" y="1602.7" width="2.7" height="6.8"/><rect x="1588.1" y="1602.7" width="2.7" height="6.8"/><rect x="1654.9" y="1602.7" width="2.7" height="6.8"/><rect x="1721.8" y="1602.7" width="2.7" height="6.8"/><rect x="1784.1" y="1604.8" width="11.8" height="2.7"/><rect x="1788.7" y="1600.2" width="2.7" height="11.8"/><rect x="1855.5" y="1602.7" width="2.7" height="6.8"/><rect x="1922.4" y="1602.7" width="2.7" height="6.8"/><rect x="1989.2" y="1602.7" width="2.7" height="6.8"/><rect x="2056.1" y="1602.7" width="2.7" height="6.8"/><rect x="2120.7" y="1604.8" width="7.2" height="2.7"/><rect x="2123.0" y="1602.5" width="2.7" height="7.2"/><rect x="2189.8" y="1602.7" width="2.7" height="6.8"/><rect x="2256.7" y="1602.7" width="2.7" height="6.8"/><rect x="2323.5" y="1602.7" width="2.7" height="6.8"/><rect x="2390.4" y="1602.7" width="2.7" height="6.8"/><rect x="2455.0" y="1604.8" width="7.2" height="2.7"/><rect x="2457.2" y="1602.5" width="2.7" height="7.2"/><rect x="2524.1" y="1602.7" width="2.7" height="6.8"/><rect x="2591.0" y="1602.7" width="2.7" height="6.8"/><rect x="2657.8" y="1602.7" width="2.7" height="6.8"/><rect x="2724.7" y="1602.7" width="2.7" height="6.8"/><rect x="2789.3" y="1604.8" width="7.2" height="2.7"/><rect x="2791.6" y="1602.5" width="2.7" height="7.2"/><rect x="2858.4" y="1602.7" width="2.7" height="6.8"/><rect x="2925.3" y="1602.7" width="2.7" height="6.8"/><rect x="2992.1" y="1602.7" width="2.7" height="6.8"/><rect x="3059.0" y="1602.7" width="2.7" height="6.8"/><rect x="184.0" y="1719.8" width="2.7" height="6.8"/><rect x="250.9" y="1719.8" width="2.7" height="6.8"/><rect x="317.7" y="1719.8" width="2.7" height="6.8"/><rect x="384.6" y="1719.8" width="2.7" height="6.8"/><rect x="449.2" y="1721.9" width="7.2" height="2.7"/><rect x="451.4" y="1719.7" width="2.7" height="7.2"/><rect x="518.3" y="1719.8" width="2.7" height="6.8"/><rect x="585.2" y="1719.8" width="2.7" height="6.8"/><rect x="652.0" y="1719.8" width="2.7" height="6.8"/><rect x="718.9" y="1719.8" width="2.7" height="6.8"/><rect x="783.5" y="1721.9" width="7.2" height="2.7"/><rect x="785.8" y="1719.7" width="2.7" height="7.2"/><rect x="852.6" y="1719.8" width="2.7" height="6.8"/><rect x="919.5" y="1719.8" width="2.7" height="6.8"/><rect x="986.3" y="1719.8" width="2.7" height="6.8"/><rect x="1053.2" y="1719.8" width="2.7" height="6.8"/><rect x="1117.8" y="1721.9" width="7.2" height="2.7"/><rect x="1120.1" y="1719.7" width="2.7" height="7.2"/><rect x="1186.9" y="1719.8" width="2.7" height="6.8"/><rect x="1253.8" y="1719.8" width="2.7" height="6.8"/><rect x="1320.6" y="1719.8" width="2.7" height="6.8"/><rect x="1387.5" y="1719.8" width="2.7" height="6.8"/><rect x="1452.1" y="1721.9" width="7.2" height="2.7"/><rect x="1454.4" y="1719.7" width="2.7" height="7.2"/><rect x="1521.2" y="1719.8" width="2.7" height="6.8"/><rect x="1588.1" y="1719.8" width="2.7" height="6.8"/><rect x="1654.9" y="1719.8" width="2.7" height="6.8"/><rect x="1721.8" y="1719.8" width="2.7" height="6.8"/><rect x="1784.1" y="1721.9" width="11.8" height="2.7"/><rect x="1788.7" y="1717.3" width="2.7" height="11.8"/><rect x="1855.5" y="1719.8" width="2.7" height="6.8"/><rect x="1922.4" y="1719.8" width="2.7" height="6.8"/><rect x="1989.2" y="1719.8" width="2.7" height="6.8"/><rect x="2056.1" y="1719.8" width="2.7" height="6.8"/><rect x="2120.7" y="1721.9" width="7.2" height="2.7"/><rect x="2123.0" y="1719.7" width="2.7" height="7.2"/><rect x="2189.8" y="1719.8" width="2.7" height="6.8"/><rect x="2256.7" y="1719.8" width="2.7" height="6.8"/><rect x="2323.5" y="1719.8" width="2.7" height="6.8"/><rect x="2390.4" y="1719.8" width="2.7" height="6.8"/><rect x="2455.0" y="1721.9" width="7.2" height="2.7"/><rect x="2457.2" y="1719.7" width="2.7" height="7.2"/><rect x="2524.1" y="1719.8" width="2.7" height="6.8"/><rect x="2591.0" y="1719.8" width="2.7" height="6.8"/><rect x="2657.8" y="1719.8" width="2.7" height="6.8"/><rect x="2724.7" y="1719.8" width="2.7" height="6.8"/><rect x="2789.3" y="1721.9" width="7.2" height="2.7"/><rect x="2791.6" y="1719.7" width="2.7" height="7.2"/><rect x="2858.4" y="1719.8" width="2.7" height="6.8"/><rect x="2925.3" y="1719.8" width="2.7" height="6.8"/><rect x="2992.1" y="1719.8" width="2.7" height="6.8"/><rect x="3059.0" y="1719.8" width="2.7" height="6.8"/></g><path d="M121.3 1665.2L122.8 1590.0L123.8 1463.4L154.7 1463.4L156.9 1479.4L158.0 1479.4L160.3 1463.4L204.8 1463.4L207.1 1479.4L224.9 1479.4L227.1 1463.4L228.2 1463.4L230.5 1479.4L234.9 1479.4L237.2 1463.4L241.6 1463.4L243.8 1479.4L244.9 1479.4L247.2 1463.4L248.3 1463.4L250.5 1479.4L251.6 1479.4L253.9 1463.4L255.0 1463.4L257.2 1479.4L258.3 1479.4L260.6 1463.4L261.7 1463.4L263.9 1479.4L265.0 1479.4L267.2 1463.4L275.0 1463.4L277.3 1479.4L281.7 1479.4L284.0 1463.4L285.1 1463.4L287.3 1479.4L288.4 1479.4L290.6 1463.4L291.7 1463.4L294.0 1479.4L298.4 1479.4L300.7 1463.4L301.8 1463.4L304.0 1479.4L305.1 1479.4L307.4 1463.4L315.1 1463.4L317.4 1479.4L318.5 1479.4L320.7 1463.4L321.8 1463.4L324.1 1479.4L328.5 1479.4L330.8 1463.4L331.9 1463.4L334.1 1479.4L338.5 1479.4L340.8 1463.4L345.2 1463.4L347.5 1479.4L348.6 1479.4L350.8 1463.4L351.9 1463.4L354.2 1479.4L358.6 1479.4L360.8 1463.4L361.9 1463.4L364.2 1479.4L368.6 1479.4L370.9 1463.4L372.0 1463.4L374.2 1479.4L378.7 1479.4L380.9 1463.4L382.0 1463.4L384.2 1479.4L385.3 1479.4L387.6 1463.4L392.0 1463.4L394.3 1479.4L395.4 1479.4L397.6 1463.4L398.7 1463.4L401.0 1479.4L402.1 1479.4L404.3 1463.4L412.1 1463.4L414.3 1479.4L415.4 1479.4L417.7 1463.4L418.8 1463.4L421.0 1479.4L422.1 1479.4L424.4 1463.4L425.5 1463.4L427.7 1479.4L432.1 1479.4L434.4 1463.4L458.9 1463.4L461.1 1479.4L462.2 1479.4L464.5 1463.4L465.6 1463.4L467.8 1479.4L472.3 1479.4L474.5 1463.4L485.6 1463.4L487.9 1479.4L492.3 1479.4L494.6 1463.4L499.0 1463.4L501.3 1479.4L502.4 1479.4L504.6 1463.4L509.0 1463.4L511.3 1479.4L515.7 1479.4L518.0 1463.4L519.1 1463.4L521.3 1479.4L522.4 1479.4L524.7 1463.4L525.8 1463.4L528.0 1479.4L529.1 1479.4L531.3 1463.4L532.4 1463.4L534.7 1479.4L542.5 1479.4L544.7 1463.4L545.8 1463.4L548.1 1479.4L552.5 1479.4L554.7 1463.4L569.2 1463.4L571.5 1479.4L572.6 1479.4L574.8 1463.4L579.2 1463.4L581.5 1479.4L582.6 1479.4L584.8 1463.4L585.9 1463.4L588.2 1479.4L592.6 1479.4L594.9 1463.4L596.0 1463.4L598.2 1479.4L602.6 1479.4L604.9 1463.4L619.4 1463.4L621.6 1479.4L622.7 1479.4L624.9 1463.4L626.0 1463.4L628.3 1479.4L629.4 1479.4L631.6 1463.4L632.7 1463.4L635.0 1479.4L636.1 1479.4L638.3 1463.4L642.8 1463.4L645.0 1479.4L646.1 1479.4L648.3 1463.4L649.4 1463.4L651.7 1479.4L659.5 1479.4L661.7 1463.4L662.8 1463.4L665.1 1479.4L666.2 1479.4L668.4 1463.4L672.8 1463.4L675.1 1479.4L679.5 1479.4L681.8 1463.4L682.9 1463.4L685.1 1479.4L692.9 1479.4L695.1 1463.4L696.2 1463.4L698.5 1479.4L699.6 1479.4L701.8 1463.4L702.9 1463.4L705.2 1479.4L706.3 1479.4L708.5 1463.4L709.6 1463.4L711.9 1479.4L716.3 1479.4L718.5 1463.4L729.7 1463.4L731.9 1479.4L733.0 1479.4L735.3 1463.4L736.4 1463.4L738.6 1479.4L739.7 1479.4L741.9 1463.4L749.7 1463.4L752.0 1479.4L763.1 1479.4L765.3 1463.4L766.4 1463.4L768.7 1479.4L773.1 1479.4L775.4 1463.4L779.8 1463.4L782.1 1479.4L783.2 1479.4L785.4 1463.4L786.5 1463.4L788.8 1479.4L789.9 1479.4L792.1 1664.2L833.3 1664.2L835.6 1648.2L836.7 1648.2L838.9 1664.2L876.8 1664.2L879.0 1648.2L880.1 1648.2L882.4 1664.2L883.5 1664.2L885.7 1648.2L886.8 1648.2L889.0 1664.2L890.1 1664.2L892.4 1648.2L896.8 1648.2L899.1 1664.2L903.5 1664.2L905.8 1648.2L910.2 1648.2L912.4 1664.2L913.5 1664.2L915.8 1648.2L916.9 1648.2L919.1 1664.2L920.2 1664.2L922.5 1648.2L926.9 1648.2L929.2 1664.2L930.3 1664.2L932.5 1648.2L936.9 1648.2L939.2 1664.2L940.3 1664.2L942.5 1648.2L943.6 1648.2L945.9 1664.2L947.0 1664.2L949.2 1648.2L950.3 1648.2L952.6 1664.2L990.4 1664.2L992.7 1648.2L993.8 1648.2L996.0 1664.2L1000.5 1664.2L1002.7 1648.2L1007.1 1648.2L1009.4 1664.2L1010.5 1664.2L1012.7 1648.2L1013.8 1648.2L1016.1 1664.2L1017.2 1664.2L1019.4 1648.2L1023.9 1648.2L1026.1 1664.2L1037.2 1664.2L1039.5 1648.2L1043.9 1648.2L1046.2 1664.2L1057.3 1664.2L1059.5 1648.2L1060.6 1648.2L1062.9 1664.2L1064.0 1664.2L1066.2 1648.2L1067.3 1648.2L1069.6 1664.2L1070.7 1664.2L1072.9 1648.2L1074.0 1648.2L1076.2 1664.2L1077.3 1664.2L1079.6 1648.2L1084.0 1648.2L1086.3 1664.2L1087.4 1664.2L1089.6 1648.2L1097.4 1648.2L1099.6 1664.2L1107.4 1664.2L1109.7 1648.2L1110.8 1648.2L1113.0 1664.2L1114.1 1664.2L1116.4 1648.2L1117.5 1648.2L1119.7 1664.2L1120.8 1664.2L1123.1 1648.2L1124.2 1648.2L1126.4 1664.2L1127.5 1664.2L1129.7 1648.2L1137.5 1648.2L1139.8 1664.2L1144.2 1664.2L1146.5 1648.2L1147.6 1648.2L1149.8 1664.2L1150.9 1664.2L1153.1 1648.2L1154.2 1648.2L1156.5 1664.2L1157.6 1664.2L1159.8 1648.2L1167.6 1648.2L1169.9 1664.2L1171.0 1664.2L1173.2 1648.2L1174.3 1648.2L1176.5 1664.2L1181.0 1664.2L1183.2 1648.2L1184.3 1648.2L1186.6 1664.2L1187.7 1664.2L1189.9 1648.2L1191.0 1648.2L1193.3 1664.2L1194.4 1664.2L1196.6 1648.2L1201.0 1648.2L1203.3 1664.2L1204.4 1664.2L1206.6 1648.2L1207.7 1648.2L1210.0 1664.2L1211.1 1664.2L1213.3 1648.2L1217.8 1648.2L1220.0 1664.2L1227.8 1664.2L1230.0 1648.2L1231.1 1648.2L1233.4 1664.2L1251.2 1664.2L1253.4 1648.2L1254.5 1648.2L1256.8 1664.2L1257.9 1664.2L1260.1 1648.2L1264.6 1648.2L1266.8 1664.2L1267.9 1664.2L1270.1 1648.2L1271.2 1648.2L1273.5 1664.2L1274.6 1664.2L1276.8 1648.2L1277.9 1648.2L1280.2 1664.2L1281.3 1664.2L1283.5 1648.2L1284.6 1648.2L1286.9 1664.2L1318.0 1664.2L1320.3 1648.2L1321.4 1648.2L1323.6 1664.2L1324.7 1664.2L1327.0 1648.2L1328.1 1648.2L1330.3 1664.2L1358.2 1664.2L1360.4 1648.2L1361.5 1648.2L1363.7 1664.2L1364.8 1664.2L1367.1 1648.2L1371.5 1648.2L1373.8 1664.2L1391.6 1664.2L1393.8 1648.2L1394.9 1648.2L1397.2 1664.2L1398.3 1664.2L1400.5 1648.2L1401.6 1648.2L1403.9 1664.2L1408.3 1664.2L1410.5 1648.2L1415.0 1648.2L1417.2 1664.2L1418.3 1664.2L1420.6 1648.2L1421.7 1648.2L1423.9 1664.2L1425.0 1664.2L1427.3 1648.2L1428.4 1648.2L1430.6 1664.2L1431.7 1664.2L1433.9 1648.2L1435.0 1648.2L1437.3 1664.2L1441.7 1664.2L1444.0 1648.2L1445.1 1648.2L1447.3 1664.2L1448.4 1664.2L1450.7 1648.2L1451.8 1648.2L1454.0 1664.2L1485.2 1664.2L1487.4 1648.2L1488.5 1648.2L1490.8 1664.2L1495.2 1664.2L1497.5 1648.2L1498.6 1648.2L1500.8 1664.2L1532.0 1664.2L1534.2 1648.2L1545.4 1648.2L1547.6 1664.2L1552.1 1664.2L1554.3 1648.2L1555.4 1648.2L1557.6 1664.2L1562.1 1664.2L1564.3 1648.2L1565.4 1648.2L1567.7 1664.2L1568.8 1664.2L1571.0 1648.2L1572.1 1648.2L1574.4 1664.2L1575.5 1664.2L1577.7 1648.2L1582.1 1648.2L1584.4 1664.2L1612.2 1664.2L1614.5 1648.2L1615.6 1648.2L1617.8 1664.2L1618.9 1664.2L1621.2 1648.2L1622.3 1648.2L1624.5 1664.2L1628.9 1664.2L1631.2 1648.2L1632.3 1648.2L1634.5 1664.2L1635.6 1664.2L1637.9 1648.2L1642.3 1648.2L1644.6 1664.2L1645.7 1664.2L1647.9 1648.2L1649.0 1648.2L1651.2 1664.2L1652.3 1664.2L1654.6 1648.2L1655.7 1648.2L1657.9 1664.2L1685.8 1664.2L1688.0 1648.2L1689.1 1648.2L1691.4 1664.2L1692.5 1664.2L1694.7 1648.2L1699.1 1648.2L1701.4 1664.2L1715.9 1664.2L1718.1 1648.2L1719.2 1648.2L1721.4 1664.2L1722.5 1664.2L1724.8 1648.2L1729.2 1648.2L1731.5 1664.2L1749.3 1664.2L1751.5 1648.2L1752.6 1648.2L1754.9 1664.2L1759.3 1664.2L1761.6 1648.2L1762.7 1648.2L1764.9 1664.2L1776.0 1664.2L1778.3 1648.2L1779.4 1648.2L1781.6 1664.2L1782.7 1664.2L1785.0 1648.2L1786.1 1648.2L1788.3 1664.2L1789.4 1664.2L1791.7 1648.2L1796.1 1648.2L1798.3 1664.2L1799.4 1664.2L1801.7 1648.2L1806.1 1648.2L1808.4 1664.2L1809.5 1664.2L1811.7 1648.2L1812.8 1648.2L1815.1 1664.2L1819.5 1664.2L1821.7 1648.2L1822.8 1648.2L1825.1 1664.2L1839.6 1664.2L1841.8 1648.2L1842.9 1648.2L1845.1 1664.2L1849.6 1664.2L1851.8 1648.2L1863.0 1648.2L1865.2 1664.2L1866.3 1664.2L1868.5 1648.2L1869.6 1648.2L1871.9 1664.2L1873.0 1664.2L1875.2 1648.2L1876.3 1648.2L1878.6 1664.2L1899.7 1664.2L1902.0 1648.2L1903.1 1648.2L1905.3 1664.2L1909.8 1664.2L1912.0 1648.2L1913.1 1648.2L1915.3 1664.2L1943.2 1664.2L1945.4 1648.2L1946.5 1648.2L1948.8 1664.2L1953.2 1664.2L1955.5 1648.2L1959.9 1648.2L1962.1 1664.2L1963.2 1664.2L1965.5 1648.2L1973.3 1648.2L1975.5 1664.2L1976.6 1664.2L1978.9 1648.2L1983.3 1648.2L1985.5 1664.2L1990.0 1664.2L1992.2 1648.2L1993.3 1648.2L1995.6 1664.2L1996.7 1664.2L1998.9 1648.2L2000.0 1648.2L2002.3 1664.2L2016.7 1664.2L2019.0 1648.2L2020.1 1648.2L2022.3 1664.2L2023.4 1664.2L2025.7 1648.2L2026.8 1648.2L2029.0 1664.2L2030.1 1664.2L2032.3 1648.2L2036.8 1648.2L2039.0 1664.2L2043.5 1664.2L2045.7 1648.2L2050.2 1648.2L2052.4 1664.2L2053.5 1664.2L2055.7 1648.2L2056.8 1648.2L2059.1 1664.2L2073.6 1664.2L2075.8 1648.2L2076.9 1648.2L2079.1 1664.2L2080.2 1664.2L2082.5 1648.2L2083.6 1648.2L2085.8 1664.2L2086.9 1664.2L2089.2 1648.2L2093.6 1648.2L2095.9 1664.2L2107.0 1664.2L2109.2 1648.2L2113.7 1648.2L2115.9 1664.2L2117.0 1664.2L2119.3 1648.2L2120.4 1648.2L2122.6 1664.2L2123.7 1664.2L2125.9 1648.2L2127.1 1648.2L2129.3 1664.2L2130.4 1664.2L2132.6 1648.2L2133.7 1648.2L2136.0 1664.2L2137.1 1664.2L2139.3 1648.2L2143.8 1648.2L2146.0 1664.2L2147.1 1664.2L2149.4 1648.2L2150.5 1648.2L2152.7 1664.2L2153.8 1664.2L2156.0 1648.2L2157.1 1648.2L2159.4 1664.2L2177.2 1664.2L2179.4 1648.2L2180.5 1648.2L2182.8 1664.2L2187.2 1664.2L2189.5 1648.2L2190.6 1648.2L2192.8 1664.2L2197.3 1664.2L2199.5 1648.2L2200.6 1648.2L2202.8 1664.2L2217.3 1664.2L2219.6 1648.2L2220.7 1648.2L2222.9 1664.2L2227.3 1664.2L2229.6 1648.2L2230.7 1648.2L2232.9 1664.2L2234.0 1664.2L2236.3 1648.2L2237.4 1648.2L2239.6 1664.2L2240.7 1664.2L2243.0 1648.2L2244.1 1648.2L2246.3 1664.2L2250.7 1664.2L2253.0 1648.2L2254.1 1648.2L2256.3 1664.2L2257.4 1664.2L2259.7 1648.2L2260.8 1648.2L2263.0 1664.2L2287.5 1664.2L2289.8 1648.2L2290.9 1648.2L2293.1 1664.2L2294.2 1664.2L2296.4 1648.2L2297.5 1648.2L2299.8 1664.2L2307.6 1664.2L2309.8 1648.2L2310.9 1648.2L2313.2 1664.2L2314.3 1664.2L2316.5 1648.2L2320.9 1648.2L2323.2 1664.2L2324.3 1664.2L2326.5 1648.2L2334.3 1648.2L2336.6 1664.2L2344.3 1664.2L2346.6 1648.2L2351.0 1648.2L2353.3 1664.2L2354.4 1664.2L2356.6 1648.2L2357.7 1648.2L2360.0 1664.2L2374.4 1664.2L2376.7 1648.2L2381.1 1648.2L2383.4 1664.2L2417.9 1664.2L2420.1 1648.2L2427.9 1648.2L2430.2 1664.2L2434.6 1664.2L2436.8 1648.2L2437.9 1648.2L2440.2 1664.2L2441.3 1664.2L2443.5 1648.2L2451.3 1648.2L2453.6 1664.2L2474.7 1664.2L2477.0 1648.2L2478.1 1648.2L2480.3 1664.2L2481.4 1664.2L2483.7 1648.2L2484.8 1648.2L2487.0 1664.2L2514.8 1664.2L2517.1 1648.2L2524.9 1648.2L2527.1 1664.2L2528.2 1664.2L2530.5 1648.2L2534.9 1648.2L2537.1 1664.2L2538.2 1664.2L2540.5 1648.2L2541.6 1648.2L2543.8 1664.2L2544.9 1664.2L2547.2 1648.2L2555.0 1648.2L2557.2 1664.2L2558.3 1664.2L2560.5 1648.2L2561.6 1648.2L2563.9 1664.2L2565.0 1664.2L2567.2 1648.2L2568.3 1648.2L2570.6 1664.2L2571.7 1664.2L2573.9 1648.2L2575.0 1648.2L2577.3 1664.2L2595.1 1664.2L2597.3 1648.2L2601.8 1648.2L2604.0 1664.2L2605.1 1664.2L2607.3 1648.2L2608.4 1648.2L2610.7 1664.2L2611.8 1664.2L2614.0 1648.2L2615.1 1648.2L2617.4 1664.2L2618.5 1664.2L2620.7 1648.2L2621.8 1648.2L2624.1 1664.2L2628.5 1664.2L2630.7 1648.2L2631.8 1648.2L2634.1 1664.2L2651.9 1664.2L2654.1 1648.2L2655.2 1648.2L2657.5 1664.2L2661.9 1664.2L2664.2 1648.2L2675.3 1648.2L2677.5 1664.2L2698.7 1664.2L2700.9 1648.2L2702.0 1648.2L2704.3 1664.2L2705.4 1664.2L2707.6 1648.2L2708.7 1648.2L2711.0 1664.2L2712.1 1664.2L2714.3 1648.2L2715.4 1648.2L2717.7 1664.2L2738.8 1664.2L2741.1 1648.2L2742.2 1648.2L2744.4 1664.2L2748.8 1664.2L2751.1 1648.2L2752.2 1648.2L2754.4 1664.2L2762.2 1664.2L2764.5 1648.2L2765.6 1648.2L2767.8 1664.2L2772.2 1664.2L2774.5 1648.2L2775.6 1648.2L2777.8 1664.2L2792.3 1664.2L2794.5 1648.2L2795.7 1648.2L2797.9 1664.2L2799.0 1664.2L2801.2 1648.2L2802.3 1648.2L2804.6 1664.2L2805.7 1664.2L2807.9 1648.2L2812.4 1648.2L2814.6 1664.2L2815.7 1664.2L2818.0 1648.2L2819.1 1648.2L2821.3 1664.2L2822.4 1664.2L2824.6 1648.2L2829.1 1648.2L2831.3 1664.2L2832.4 1664.2L2834.7 1648.2L2835.8 1648.2L2838.0 1664.2L2869.2 1664.2L2871.4 1648.2L2872.5 1648.2L2874.8 1664.2L2875.9 1664.2L2878.1 1648.2L2885.9 1648.2L2888.2 1664.2L2892.6 1664.2L2894.8 1648.2L2895.9 1648.2L2898.2 1664.2L2929.4 1664.2L2931.6 1648.2L2932.7 1648.2L2935.0 1664.2L2939.4 1664.2L2941.6 1648.2L2942.7 1648.2L2945.0 1664.2L2966.1 1664.2L2968.4 1648.2L2969.5 1648.2L2971.7 1664.2L2976.2 1664.2L2978.4 1648.2L2979.5 1648.2L2981.8 1664.2L2989.5 1664.2L2991.8 1648.2L2999.6 1648.2L3001.8 1664.2L3006.3 1664.2L3008.5 1648.2L3009.6 1648.2L3011.8 1664.2L3012.9 1664.2L3015.2 1648.2L3016.3 1648.2L3018.5 1664.2L3029.7 1664.2L3031.9 1648.2L3033.0 1648.2L3035.2 1664.2L3036.3 1664.2L3038.6 1648.2L3039.7 1648.2L3041.9 1664.2L3049.7 1664.2L3052.0 1648.2L3056.4 1648.2L3058.6 1664.2L3069.8 1664.2" fill="none" stroke="#00ffff" stroke-width="3.1" stroke-linejoin="round"/><path d="M121.3 1302.0L122.6 1262.0L124.0 1232.6L127.4 1232.6L130.7 1228.6L134.1 1232.6L140.8 1232.6L144.1 1237.1L147.4 1232.6L154.1 1232.6L157.5 1237.1L164.2 1237.1L167.5 1232.6L170.8 1232.6L174.2 1237.1L177.5 1228.6L180.9 1228.6L184.2 1232.6L190.9 1232.6L194.2 1228.1L197.6 1232.6L200.9 1228.1L204.3 1232.6L207.6 1232.6L211.0 1228.1L214.3 1232.6L241.0 1232.6L244.4 1237.6L247.7 1237.6L251.1 1232.6L287.8 1232.6L291.2 1228.1L294.5 1232.6L344.7 1232.6L348.0 1228.1L351.4 1232.6L418.2 1232.6L421.6 1237.6L424.9 1232.6L521.9 1232.6L525.2 1228.1L528.5 1232.6L555.3 1232.6L558.6 1228.1L562.0 1232.6L582.0 1232.6L585.4 1228.1L588.7 1232.6L592.1 1232.6L595.4 1228.1L598.7 1232.6L632.2 1232.6L635.5 1228.1L638.9 1228.1L642.2 1232.6L648.9 1232.6L652.2 1228.1L655.6 1232.6L665.6 1232.6L669.0 1237.6L672.3 1232.6L725.8 1232.6L729.1 1228.1L732.5 1232.6L735.8 1232.6L739.2 1228.1L742.5 1232.6L752.5 1232.6L755.9 1228.1L759.2 1232.6L769.2 1232.6L772.6 1228.1L775.9 1232.6L779.3 1228.1L782.6 1232.6L786.0 1232.6L789.3 1228.1L792.6 1299.6L799.3 1299.6L802.7 1303.1L806.0 1306.6L809.4 1306.6L812.7 1299.6L816.0 1306.6L822.7 1306.6L826.1 1299.6L829.4 1299.6L832.8 1257.0L859.5 1257.0L862.8 1252.4L866.2 1252.4L869.5 1257.0L872.9 1252.4L879.6 1252.4L882.9 1257.0L886.2 1257.0L889.6 1252.4L892.9 1257.0L899.6 1257.0L903.0 1252.4L906.3 1252.4L909.6 1257.0L913.0 1252.4L916.3 1257.0L919.7 1257.0L923.0 1252.4L926.4 1257.0L929.7 1252.4L933.0 1252.4L936.4 1257.0L939.7 1252.4L943.1 1257.0L946.4 1252.4L953.1 1252.4L956.5 1257.0L976.5 1257.0L979.9 1252.4L983.2 1257.0L986.5 1252.4L989.9 1252.4L993.2 1257.0L996.6 1257.0L999.9 1299.6L1003.3 1306.6L1006.6 1306.6L1009.9 1299.6L1016.6 1299.6L1020.0 1306.6L1023.3 1299.6L1026.7 1306.6L1030.0 1299.6L1036.7 1299.6L1040.0 1306.6L1043.4 1306.6L1046.7 1299.6L1063.4 1299.6L1066.8 1306.6L1070.1 1306.6L1073.5 1299.6L1076.8 1306.6L1083.5 1306.6L1086.8 1299.6L1090.2 1306.6L1093.5 1299.6L1096.9 1299.6L1100.2 1306.6L1103.5 1306.6L1106.9 1299.6L1116.9 1299.6L1120.3 1306.6L1123.6 1299.6L1130.3 1299.6L1133.6 1306.6L1143.7 1306.6L1147.0 1299.6L1150.3 1306.6L1157.0 1306.6L1160.4 1299.6L1163.7 1306.6L1167.1 1214.4L1170.4 1209.8L1173.7 1214.4L1177.1 1214.4L1180.4 1209.8L1187.1 1209.8L1190.5 1214.4L1193.8 1214.4L1197.1 1209.8L1200.5 1214.4L1203.8 1209.8L1210.5 1209.8L1213.9 1218.4L1217.2 1213.8L1220.5 1209.8L1223.9 1214.4L1330.9 1214.4L1334.2 1299.6L1337.6 1306.6L1340.9 1299.6L1344.2 1299.6L1347.6 1306.6L1350.9 1306.6L1354.3 1299.6L1357.6 1299.6L1361.0 1306.6L1367.6 1306.6L1371.0 1303.1L1374.3 1299.6L1377.7 1299.6L1381.0 1306.6L1384.4 1299.6L1387.7 1299.6L1391.0 1306.6L1401.1 1306.6L1404.4 1303.1L1407.8 1299.6L1411.1 1306.6L1414.4 1299.6L1417.8 1306.6L1421.1 1303.1L1424.5 1299.6L1437.8 1299.6L1441.2 1306.6L1444.5 1299.6L1461.2 1299.6L1464.6 1306.6L1467.9 1306.6L1471.3 1299.6L1474.6 1306.6L1478.0 1299.6L1491.3 1299.6L1494.7 1303.1L1498.0 1299.6L1501.4 996.6L1504.7 979.7L1508.0 975.1L1511.4 973.8L1584.9 973.8L1588.3 967.8L1591.6 973.8L1601.6 973.8L1605.0 967.8L1608.3 973.8L1628.4 973.8L1631.7 967.8L1635.1 973.8L1665.2 973.8L1668.5 1276.8L1671.9 1293.7L1675.2 1298.3L1678.5 1299.6L1681.9 1299.6L1685.2 1306.6L1688.6 1306.6L1691.9 1299.6L1695.3 1306.6L1698.6 1299.6L1701.9 1306.6L1712.0 1306.6L1715.3 1299.6L1718.7 1306.6L1722.0 1306.6L1725.3 1299.6L1728.7 1299.6L1732.0 1306.6L1735.4 1299.6L1738.7 1299.6L1742.1 1306.6L1745.4 1299.6L1748.7 1299.6L1752.1 1306.6L1755.4 1299.6L1758.8 1303.1L1762.1 1306.6L1772.1 1306.6L1775.5 1299.6L1778.8 1299.6L1782.2 1306.6L1785.5 1306.6L1788.9 1299.6L1792.2 1306.6L1795.5 1299.6L1798.9 1306.6L1805.6 1306.6L1808.9 1299.6L1815.6 1299.6L1818.9 1306.6L1822.3 1299.6L1825.6 1306.6L1832.3 1306.6L1835.7 1203.2L1865.7 1203.2L1869.1 1195.7L1872.4 1203.2L1875.8 1195.7L1879.1 1195.7L1882.5 1203.2L1895.8 1203.2L1899.2 1195.7L1902.5 1203.2L1905.9 1195.7L1912.5 1195.7L1915.9 1203.2L1919.2 1203.2L1922.6 1195.7L1942.6 1195.7L1946.0 1203.2L1949.3 1203.2L1952.7 1195.7L1956.0 1203.2L1959.4 1203.2L1962.7 1195.7L1966.0 1203.2L1969.4 1203.2L1972.7 1195.7L1982.8 1195.7L1986.1 1203.2L1996.1 1203.2L1999.5 1195.7L2002.8 1299.6L2006.2 1299.6L2009.5 1306.6L2012.8 1299.6L2016.2 1306.6L2019.5 1306.6L2022.9 1299.6L2026.2 1306.6L2029.6 1299.6L2032.9 1306.6L2036.2 1299.6L2039.6 1306.6L2042.9 1299.6L2066.3 1299.6L2069.7 1306.6L2073.0 1299.6L2076.4 1306.6L2089.7 1306.6L2093.1 1299.6L2096.4 1306.6L2099.8 1299.6L2103.1 1306.6L2109.8 1306.6L2113.1 1299.6L2116.5 1306.6L2123.2 1306.6L2126.5 1299.6L2129.8 1306.6L2133.2 1299.6L2136.5 1299.6L2139.9 1306.6L2143.2 1306.6L2146.6 1299.6L2149.9 1299.6L2153.2 1306.6L2156.6 1299.6L2159.9 1306.6L2163.3 1306.6L2166.6 1299.6L2170.0 1189.4L2210.1 1189.4L2213.4 1183.9L2216.8 1189.4L2327.1 1189.4L2330.4 1183.9L2333.8 1189.4L2337.1 1299.6L2340.5 1303.1L2343.8 1306.6L2347.1 1306.6L2350.5 1303.1L2353.8 1299.6L2357.2 1306.6L2360.5 1306.6L2363.9 1299.6L2367.2 1306.6L2370.5 1299.6L2373.9 1306.6L2377.2 1306.6L2380.6 1299.6L2383.9 1306.6L2390.6 1306.6L2393.9 1299.6L2397.3 1306.6L2400.6 1299.6L2404.0 1306.6L2414.0 1306.6L2417.3 1299.6L2420.7 1299.6L2424.0 1306.6L2427.4 1306.6L2430.7 1299.6L2434.1 1299.6L2437.4 1303.1L2440.7 1306.6L2444.1 1299.6L2447.4 1306.6L2450.8 1299.6L2460.8 1299.6L2464.1 1306.6L2467.5 1299.6L2470.8 1306.6L2474.2 1299.6L2477.5 1299.6L2480.9 1306.6L2484.2 1306.6L2487.5 1299.6L2490.9 1299.6L2494.2 1306.6L2497.6 1299.6L2500.9 1299.6L2504.3 1187.0L2510.9 1187.0L2514.3 1180.5L2517.6 1187.0L2527.7 1187.0L2531.0 1180.5L2534.3 1187.0L2537.7 1180.5L2541.0 1187.0L2544.4 1180.5L2547.7 1187.0L2551.1 1187.0L2554.4 1180.5L2557.7 1187.0L2561.1 1180.5L2567.8 1180.5L2571.1 1187.0L2577.8 1187.0L2581.1 1180.5L2584.5 1187.0L2587.8 1187.0L2591.2 1180.5L2594.5 1187.0L2597.9 1187.0L2601.2 1180.5L2614.6 1180.5L2617.9 1187.0L2621.3 1180.5L2624.6 1187.0L2627.9 1180.5L2631.3 1187.0L2634.6 1180.5L2638.0 1194.0L2641.3 1187.5L2644.7 1194.0L2648.0 1187.5L2651.4 1187.0L2654.7 1187.0L2658.0 1180.5L2661.4 1180.5L2664.7 1187.0L2668.1 1187.0L2671.4 1299.6L2674.8 1299.6L2678.1 1306.6L2681.4 1299.6L2684.8 1306.6L2688.1 1299.6L2691.5 1299.6L2694.8 1306.6L2698.2 1303.1L2701.5 1299.6L2711.5 1299.6L2714.9 1306.6L2721.6 1306.6L2724.9 1299.6L2728.2 1306.6L2731.6 1306.6L2734.9 1299.6L2738.3 1299.6L2741.6 1306.6L2745.0 1306.6L2748.3 1299.6L2751.6 1306.6L2755.0 1306.6L2758.3 1303.1L2761.7 1306.6L2765.0 1306.6L2768.4 1299.6L2771.7 1306.6L2775.0 1303.1L2778.4 1306.6L2781.7 1306.6L2785.1 1299.6L2788.4 1306.6L2791.8 1306.6L2795.1 1299.6L2798.4 1299.6L2801.8 1306.6L2805.1 1299.6L2808.5 1306.6L2815.2 1306.6L2818.5 1299.6L2828.5 1299.6L2831.9 1306.6L2835.2 1306.6L2838.6 1181.6L2845.2 1181.6L2848.6 1176.1L2851.9 1181.6L2902.1 1181.6L2905.4 1176.1L2908.8 1181.6L2928.8 1181.6L2932.2 1176.1L2935.5 1181.6L2965.6 1181.6L2968.9 1176.1L2972.3 1181.6L2975.6 1176.1L2979.0 1176.1L2982.3 1181.6L2985.7 1181.6L2989.0 1176.1L2992.3 1181.6L3002.4 1181.6L3005.7 1299.6L3012.4 1299.6L3015.7 1306.6L3022.4 1306.6L3025.8 1299.6L3029.1 1299.6L3032.5 1306.6L3035.8 1299.6L3039.1 1306.6L3042.5 1299.6L3045.8 1299.6L3049.2 1303.1L3052.5 1306.6L3055.9 1306.6L3059.2 1299.6L3065.9 1299.6L3069.2 1306.6" fill="none" stroke="#ffff00" stroke-width="3.2" stroke-linejoin="round"/><path d="M765.1 613.9H809.9V661.9L787.5 671.2L765.1 661.9Z" fill="#ffff00" stroke="#26263c" stroke-width="1.2" stroke-opacity=".75"/><path d="M773.9 622.5H801.1M787.5 622.5V663.3" stroke="#2b2b33" stroke-width="2.0" fill="none"/><path d="M6.4 1273.4H92.5L121 1303.8L92.5 1334.4H6.4Z" fill="#ffff00"/><path d="M6.4 1620.2H92.5L121 1650.6L92.5 1681.2H6.4Z" fill="#00ffff"/></svg>
<span class="t tf" style="left:7.1px;top:1283.0px;font-size:40px;color:#3b3b3b;transform:scaleX(1.0380);">CH1</span>
<span class="t tf" style="left:7.1px;top:1630.0px;font-size:40px;color:#3b3b3b;transform:scaleX(1.0535);">CH2</span>
<span class="t tf" style="left:-28.8px;top:339.0px;font-size:49px;color:#ffff00;">Run</span>
<span class="t ts" style="left:322.0px;top:1096.0px;font-size:77px;color:#ffff00;transform:scaleX(0.9197);">OUT</span>
<span class="t tc" style="left:469.5px;top:1093.0px;font-size:80px;color:#ffff00;font-weight:300;transform:scaleX(1.0397);">信号</span>
<span class="t ts" style="left:288.2px;top:1532.0px;font-size:73px;color:#00b0f0;transform:scaleX(0.8364);">RESET</span>
<span class="t tc" style="left:490.7px;top:1527.0px;font-size:80px;color:#00b0f0;font-weight:300;transform:scaleX(1.0397);">信号</span>
<span class="t ts" style="left:859.0px;top:1343.0px;font-size:58px;color:#fff;transform:scaleX(0.9754);">63Hz</span>
<span class="t ts" style="left:1174.7px;top:1347.0px;font-size:58px;color:#fff;transform:scaleX(0.9764);">160Hz</span>
<span class="t ts" style="left:1513.8px;top:1348.0px;font-size:58px;color:#fff;transform:scaleX(0.9701);">400Hz</span>
<span class="t ts" style="left:1861.7px;top:1351.0px;font-size:58px;color:#fff;transform:scaleX(0.9712);">1kHz</span>
<span class="t ts" style="left:2170.9px;top:1351.0px;font-size:58px;color:#fff;transform:scaleX(0.9749);">2.5kHz</span>
<span class="t ts" style="left:2490.8px;top:1352.0px;font-size:58px;color:#fff;transform:scaleX(0.9879);">6.25kHz</span>
<span class="t ts" style="left:2851.4px;top:1346.0px;font-size:58px;color:#fff;transform:scaleX(0.9753);">16kHz</span>
<div class="panel" style="left:-40.0px;top:1857.1px;width:545.0px;height:189.2px;border:2.8px solid #1f9a8a;box-sizing:border-box"></div>
<div style="left:-40.0px;top:1871.2px;width:530.6px;height:160.6px;background:#2a2f30"></div>
<div class="panel" style="left:520.9px;top:1857.1px;width:526.5px;height:189.2px;border:2.8px solid #1f9a8a;box-sizing:border-box"></div>
<div style="left:534.9px;top:1871.2px;width:497.8px;height:160.6px;background:#2a2f30"></div>
<span class="t tf" style="left:-8.1px;top:1871.0px;font-size:48.7px;color:#ffff00;">CH1</span>
<span class="t tf" style="left:317.3px;top:1871.0px;font-size:48.7px;color:#ffff00;">X10  DC</span>
<span class="t tf" style="left:344.2px;top:1922.0px;font-size:48.7px;color:#ffff00;">1 V/div</span>
<span class="t tf" style="left:254.2px;top:1974.0px;font-size:48.7px;color:#ffff00;">-423.08 mV</span>
<span class="t tf" style="left:534.3px;top:1871.0px;font-size:48.7px;color:#00ffff;">CH2</span>
<span class="t tf" style="left:859.3px;top:1871.0px;font-size:48.7px;color:#00ffff;">X10  DC</span>
<span class="t tf" style="left:885.8px;top:1922.0px;font-size:48.7px;color:#00ffff;">2 V/div</span>
<span class="t tf" style="left:884.2px;top:1974.0px;font-size:48.7px;color:#00ffff;">-6.77 V</span>
<div class="panel" style="left:-10.0px;top:2073.1px;width:3081.0px;height:135.6px;border:2.7px solid #1f9a8a;border-left:0;border-right:0;box-sizing:border-box"></div>
<div style="left:-10.0px;top:2086.6px;width:3081.0px;height:107.8px;background:#2a2f30"></div>
<span class="t tf" style="left:-8.4px;top:2086.0px;font-size:48.7px;color:#ffff00;">Vmin= -22.616 mV</span>
<span class="t tf" style="left:491.7px;top:2086.0px;font-size:48.7px;color:#ffff00;transform:scaleX(0.9933);">Vmax= 2.006 V</span>
<span class="t tf" style="left:990.7px;top:2086.0px;font-size:48.7px;color:#ffff00;transform:scaleX(0.9903);">Vpp= 2.029 V</span>
<span class="t tf" style="left:1488.6px;top:2086.0px;font-size:48.7px;color:#ffff00;">Vrms= 950.556 mV</span>
<span class="t tf" style="left:1984.5px;top:2086.0px;font-size:48.7px;color:#ffff00;transform:scaleX(1.0206);">F= 199.920 Hz</span>
<span class="t tf" style="left:-8.2px;top:2138.0px;font-size:48.7px;color:#00ffff;">Vmin= -233.434 mV</span>
<span class="t tf" style="left:491.7px;top:2138.0px;font-size:48.7px;color:#00ffff;transform:scaleX(0.9933);">Vmax= 3.181 V</span>
<span class="t tf" style="left:990.7px;top:2138.0px;font-size:48.7px;color:#00ffff;transform:scaleX(0.9860);">Vpp= 3.414 V</span>
<span class="t tf" style="left:1488.6px;top:2138.0px;font-size:48.7px;color:#00ffff;transform:scaleX(1.0058);">F= 0.000 Hz</span>
<div class="titlebar" style="left:0.0px;top:0.0px;width:3061.0px;height:77.0px;background:#fff"></div>
<div style="left:0.0px;top:14.0px;width:2.0px;height:46.0px;background:#b9b9b9"></div>
<span class="t ts" style="left:10.5px;top:20.0px;font-size:39.5px;color:#000;transform:scaleX(1.0409);">Oscilloscope - Multi VirAnalyzer</span>
<div style="left:1737.0px;top:0.0px;width:833.0px;height:3.5px;background:#e6e6e6"></div>
<div style="left:2068.0px;top:0.0px;width:166.0px;height:3.5px;background:#0a64d8"></div>
<div style="left:2864.0px;top:-4.0px;width:220.0px;height:23.4px;border:2px solid #d9b977;box-sizing:border-box;background:#fff"></div>
<div style="left:2877.2px;top:-3.0px;width:110.0px;height:20.5px;background:linear-gradient(#1c1c1c,#000);border-radius:0 0 4px 4px"><div style="left:10.3px;top:-3.0px;width:9.0px;height:7.5px;background:#fff;border-radius:0 0 4px 4px"></div><div style="left:46.8px;top:-3.0px;width:9.0px;height:7.5px;background:#fff;border-radius:0 0 4px 4px"></div><div style="left:67.8px;top:-3.0px;width:9.0px;height:7.5px;background:#fff;border-radius:0 0 4px 4px"></div><div style="left:89.3px;top:-3.0px;width:9.0px;height:7.5px;background:#fff;border-radius:0 0 4px 4px"></div></div>
<div style="left:3002.5px;top:0.0px;width:10.4px;height:17.5px;background:#c1c7d3"></div>
<div style="left:3016.0px;top:-3.0px;width:60.0px;height:20.5px;background:linear-gradient(#1c1c1c,#000);border-radius:0 0 0 4px"><div style="left:10.0px;top:0.0px;width:9.0px;height:7.5px;background:#fff;border-radius:0 0 4px 4px"></div></div>
<div class="menubar" style="left:0.0px;top:77.0px;width:3061.0px;height:72.0px;background:#bfdbff"></div>
<span class="t ts" style="left:-26.2px;top:93.0px;font-size:37px;color:#15428b;transform:scaleX(1.0700);">File</span>
<span class="t ts" style="left:72.3px;top:93.0px;font-size:37px;color:#15428b;transform:scaleX(1.0225);">View</span>
<span class="t ts" style="left:188.5px;top:93.0px;font-size:37px;color:#15428b;transform:scaleX(1.0707);">Channel</span>
<span class="t ts" style="left:368.3px;top:93.0px;font-size:37px;color:#15428b;transform:scaleX(1.0623);">Trigger</span>
<span class="t ts" style="left:526.1px;top:93.0px;font-size:37px;color:#15428b;transform:scaleX(1.1193);">Horizontal</span>
<span class="t ts" style="left:743.9px;top:93.0px;font-size:37px;color:#15428b;transform:scaleX(1.0367);">Cursor</span>
<span class="t ts" style="left:893.2px;top:93.0px;font-size:37px;color:#15428b;transform:scaleX(1.0500);">Measure</span>
<span class="t ts" style="left:1077.7px;top:93.0px;font-size:37px;color:#15428b;transform:scaleX(1.0356);">Display</span>
<span class="t ts" style="left:1236.6px;top:93.0px;font-size:37px;color:#15428b;transform:scaleX(1.1345);">Utility</span>
<span class="t ts" style="left:1373.3px;top:93.0px;font-size:37px;color:#15428b;transform:scaleX(1.1371);">Option</span>
<span class="t ts" style="left:1530.4px;top:93.0px;font-size:37px;color:#15428b;transform:scaleX(1.0059);">Skin</span>
<span class="t ts" style="left:1635.0px;top:93.0px;font-size:37px;color:#15428b;transform:scaleX(1.0931);">Help</span>
<div class="toolbar" style="left:0.0px;top:149.0px;width:3061.0px;height:97.0px;background:#bfdbff"></div>
<div class="tg" style="left:-10.0px;top:148.4px;width:352.0px;height:95.0px;"></div>
<div class="tg" style="left:347.5px;top:148.4px;width:529.0px;height:95.0px;"></div>
<div class="tg" style="left:881.0px;top:148.4px;width:112.5px;height:95.0px;"></div>
<div class="tg" style="left:999.0px;top:148.4px;width:204.0px;height:95.0px;"></div>
<div class="tg" style="left:1208.0px;top:148.4px;width:309.0px;height:95.0px;"></div>
<div class="tg" style="left:1522.0px;top:148.4px;width:671.5px;height:95.0px;"></div>
<div class="tg" style="left:2198.5px;top:148.4px;width:205.0px;height:95.0px;"></div>
<div style="left:0.0px;top:245.2px;width:3061.0px;height:1.2px;background:#b4c8e4"></div>
<div style="left:0.0px;top:162.3px;width:41.5px;height:67.0px;background:#9b9b9b"><div style="left:0.0px;top:27.3px;width:34.0px;height:4.8px;background:#e4e9f1"></div><div style="left:30.0px;top:27.3px;width:4.0px;height:12.5px;background:#e4e9f1"></div><div style="left:0.0px;top:14.0px;width:1.8px;height:13.5px;background:#e4e9f1"></div></div>
<svg class="ic" style="left:62.5px;top:162.3px" width="68.5" height="67" viewBox="0 0 68 67"><rect x="0" y="0" width="68" height="67" rx="3.5" fill="url(#ig)"/><rect x="14" y="8" width="41.5" height="27" fill="#fff"/><circle cx="33.3" cy="50.3" r="7.6" fill="#fff"/><rect x="30.3" y="47.6" width="6" height="5.6" fill="#111"/></svg>
<svg class="ic" style="left:152.5px;top:162.3px" width="68.5" height="67" viewBox="0 0 68 67"><rect x="0" y="0" width="68" height="67" rx="3.5" fill="url(#ig)"/><text x="33.5" y="52.5" text-anchor="middle" font-family="Liberation Sans, sans-serif" font-size="47" fill="#fff">?</text></svg>
<div style="left:239.7px;top:168.7px;width:2.2px;height:56.5px;background:#6f9fe3"></div><div style="left:241.9px;top:169.7px;width:1.8px;height:56.5px;background:#f3f8ff"></div>
<svg class="ic" style="left:261.0px;top:162.3px" width="68.5" height="67" viewBox="0 0 68 67"><rect x="0" y="0" width="68" height="67" rx="3.5" fill="url(#ig)"/><path d="M8 35 L20 22 L30 14 L37 12 L42 18 L39 23 L37.5 28.5 L49 44.5 L45 52 L38 50 L27 35.5 L19 34 L13 38 Z" fill="#fff"/></svg>
<div style="left:356.8px;top:174.8px;width:3.6px;height:3.6px;background:#fff"></div><div style="left:355.5px;top:173.5px;width:3.6px;height:3.6px;background:#5f8fdc"></div><div style="left:356.8px;top:183.6px;width:3.6px;height:3.6px;background:#fff"></div><div style="left:355.5px;top:182.3px;width:3.6px;height:3.6px;background:#5f8fdc"></div><div style="left:356.8px;top:192.5px;width:3.6px;height:3.6px;background:#fff"></div><div style="left:355.5px;top:191.2px;width:3.6px;height:3.6px;background:#5f8fdc"></div><div style="left:356.8px;top:201.4px;width:3.6px;height:3.6px;background:#fff"></div><div style="left:355.5px;top:200.1px;width:3.6px;height:3.6px;background:#5f8fdc"></div><div style="left:356.8px;top:210.3px;width:3.6px;height:3.6px;background:#fff"></div><div style="left:355.5px;top:209.0px;width:3.6px;height:3.6px;background:#5f8fdc"></div>
<span class="t ts" style="left:376.1px;top:177.0px;font-size:37.5px;color:#0b2a8f;transform:scaleX(1.1423);">Math</span>
<span class="t ts" style="left:489.8px;top:177.0px;font-size:37.5px;color:#0b2a8f;">Reference</span>
<div class="hot" style="left:675.8px;top:153.5px;width:88.3px;height:86.0px;"></div>
<svg class="ic" style="left:685.3px;top:162.3px" width="68.5" height="67" viewBox="0 0 68 67"><rect x="0" y="0" width="68" height="67" rx="3.5" fill="url(#ig)"/><rect x="4.5" y="4.5" width="58" height="57" fill="none" stroke="#9a9a9a" stroke-width="4"/><path d="M4.5 2.5V61.5H62" fill="none" stroke="#fff" stroke-width="4"/><rect x="2.5" y="13" width="4" height="9" fill="#ffa53a"/><rect x="36.3" y="5" width="4.6" height="57" fill="#fff"/><path d="M41 26 L47 29 L54 29 L54 36 L47 36 L41 39 Z" fill="#ddd"/><rect x="46" y="30.5" width="3" height="4" fill="#444"/></svg>
<div style="left:772.7px;top:168.7px;width:2.2px;height:56.5px;background:#6f9fe3"></div><div style="left:774.9px;top:169.7px;width:1.8px;height:56.5px;background:#f3f8ff"></div>
<svg class="ic" style="left:793.7px;top:162.3px" width="68.5" height="67" viewBox="0 0 68 67"><rect x="0" y="0" width="68" height="67" rx="3.5" fill="url(#ig)"/><rect x="4" y="4" width="60" height="58" fill="none" stroke="#8c8c8c" stroke-width="4"/><path d="M4 3V62H63" fill="none" stroke="#f4f4f4" stroke-width="4"/><rect x="14.7" y="16.5" width="35.5" height="37" fill="#3c3c3c" stroke="#999" stroke-width="6"/><rect x="14.7" y="16.5" width="35.5" height="37" fill="none" stroke="#fff" stroke-width="3"/></svg>
<div style="left:889.8px;top:174.8px;width:3.6px;height:3.6px;background:#fff"></div><div style="left:888.5px;top:173.5px;width:3.6px;height:3.6px;background:#5f8fdc"></div><div style="left:889.8px;top:183.6px;width:3.6px;height:3.6px;background:#fff"></div><div style="left:888.5px;top:182.3px;width:3.6px;height:3.6px;background:#5f8fdc"></div><div style="left:889.8px;top:192.5px;width:3.6px;height:3.6px;background:#fff"></div><div style="left:888.5px;top:191.2px;width:3.6px;height:3.6px;background:#5f8fdc"></div><div style="left:889.8px;top:201.4px;width:3.6px;height:3.6px;background:#fff"></div><div style="left:888.5px;top:200.1px;width:3.6px;height:3.6px;background:#5f8fdc"></div><div style="left:889.8px;top:210.3px;width:3.6px;height:3.6px;background:#fff"></div><div style="left:888.5px;top:209.0px;width:3.6px;height:3.6px;background:#5f8fdc"></div>
<svg class="ic" style="left:911.0px;top:162.3px" width="68.5" height="67" viewBox="0 0 68 67"><rect x="0" y="0" width="68" height="67" rx="3.5" fill="url(#ig)"/><g stroke="#9c9c9c" stroke-width="4.5"><path d="M34 7V24M34 44V61M6 32.5H19M49 32.5H62"/></g><g fill="#fff"><path d="M25 18 L43 18 L34 25Z"/><path d="M25 48 L43 48 L34 41Z"/><path d="M16 24 L16 42 L23 33Z"/><path d="M52 24 L52 42 L45 33Z"/></g></svg>
<div style="left:1007.3px;top:174.8px;width:3.6px;height:3.6px;background:#fff"></div><div style="left:1006.0px;top:173.5px;width:3.6px;height:3.6px;background:#5f8fdc"></div><div style="left:1007.3px;top:183.6px;width:3.6px;height:3.6px;background:#fff"></div><div style="left:1006.0px;top:182.3px;width:3.6px;height:3.6px;background:#5f8fdc"></div><div style="left:1007.3px;top:192.5px;width:3.6px;height:3.6px;background:#fff"></div><div style="left:1006.0px;top:191.2px;width:3.6px;height:3.6px;background:#5f8fdc"></div><div style="left:1007.3px;top:201.4px;width:3.6px;height:3.6px;background:#fff"></div><div style="left:1006.0px;top:200.1px;width:3.6px;height:3.6px;background:#5f8fdc"></div><div style="left:1007.3px;top:210.3px;width:3.6px;height:3.6px;background:#fff"></div><div style="left:1006.0px;top:209.0px;width:3.6px;height:3.6px;background:#5f8fdc"></div>
<svg class="ic" style="left:1028.6px;top:162.3px" width="68.5" height="67" viewBox="0 0 68 67"><rect x="0" y="0" width="68" height="67" rx="3.5" fill="url(#ig)"/><g transform="rotate(52 34 33)" fill="none" stroke="#fff"><rect x="6" y="16" width="56" height="34" rx="5" stroke-width="3.4" stroke-dasharray="3.2 2.2"/><rect x="11" y="21" width="46" height="24" rx="3" stroke-width="3" stroke-dasharray="3.2 2.2"/><path d="M40 28 A7 7 0 1 0 40 38" stroke-width="3.4"/></g></svg>
<div class="hot" style="left:1110.0px;top:153.5px;width:87.6px;height:86.0px;"></div>
<svg class="ic" style="left:1118.8px;top:162.3px" width="68.5" height="67" viewBox="0 0 68 67"><rect x="0" y="0" width="68" height="67" rx="3.5" fill="url(#ig)"/><rect x="2.5" y="3.5" width="62" height="57.5" fill="none" stroke="#fff" stroke-width="4"/><rect x="2.5" y="30" width="62" height="7" fill="#fff"/><rect x="58" y="3" width="6" height="58" fill="#ddd"/><path d="M8 30 C12 4, 36 0, 54 30" fill="none" stroke="#9fe2ff" stroke-width="5" stroke-dasharray="3 2"/><path d="M14 30 C18 14, 34 12, 42 30" fill="none" stroke="#9fe2ff" stroke-width="4" stroke-dasharray="3 2"/><path d="M22 41 L32 56 L40 50 L56 42" fill="none" stroke="#b8ecff" stroke-width="5" stroke-dasharray="3 2"/><path d="M26 40 L38 40 L32 53Z" fill="#fff"/></svg>
<div style="left:1214.6px;top:174.8px;width:3.6px;height:3.6px;background:#fff"></div><div style="left:1213.3px;top:173.5px;width:3.6px;height:3.6px;background:#5f8fdc"></div><div style="left:1214.6px;top:183.6px;width:3.6px;height:3.6px;background:#fff"></div><div style="left:1213.3px;top:182.3px;width:3.6px;height:3.6px;background:#5f8fdc"></div><div style="left:1214.6px;top:192.5px;width:3.6px;height:3.6px;background:#fff"></div><div style="left:1213.3px;top:191.2px;width:3.6px;height:3.6px;background:#5f8fdc"></div><div style="left:1214.6px;top:201.4px;width:3.6px;height:3.6px;background:#fff"></div><div style="left:1213.3px;top:200.1px;width:3.6px;height:3.6px;background:#5f8fdc"></div><div style="left:1214.6px;top:210.3px;width:3.6px;height:3.6px;background:#fff"></div><div style="left:1213.3px;top:209.0px;width:3.6px;height:3.6px;background:#5f8fdc"></div>
<div class="hot" style="left:1227.0px;top:153.5px;width:88.7px;height:86.0px;"></div>
<svg class="ic" style="left:1236.0px;top:162.3px" width="68.5" height="67" viewBox="0 0 68 67"><rect x="0" y="0" width="68" height="67" rx="3.5" fill="url(#ig)"/><path d="M10.5 13 L55 54" stroke="#fff" stroke-width="4.6" stroke-linecap="round" stroke-dasharray="0.1 5.2"/><path d="M10.5 13 L55 54" stroke="#fff" stroke-width="2.6"/></svg>
<svg class="ic" style="left:1326.3px;top:162.3px" width="68.5" height="67" viewBox="0 0 68 67"><rect x="0" y="0" width="68" height="67" rx="3.5" fill="url(#ig)"/><rect x="20.5" y="21.7" width="23" height="25.3" fill="#fff"/><rect x="20.5" y="45" width="23" height="2" fill="#d8d8d8"/></svg>
<div style="left:1413.3px;top:168.7px;width:2.2px;height:56.5px;background:#6f9fe3"></div><div style="left:1415.5px;top:169.7px;width:1.8px;height:56.5px;background:#f3f8ff"></div>
<svg class="ic" style="left:1434.6px;top:162.3px" width="68.5" height="67" viewBox="0 0 68 67"><rect x="0" y="0" width="68" height="67" rx="3.5" fill="url(#ig)"/><rect x="8.7" y="13.8" width="20.5" height="14.8" fill="#a40000"/><rect x="36.3" y="13" width="20.5" height="15.6" fill="#fff"/><rect x="8.7" y="36" width="20.5" height="17.4" fill="#00fa00"/><rect x="36.3" y="36" width="20.5" height="17.4" fill="#0000fa"/></svg>
<div style="left:1530.6px;top:174.8px;width:3.6px;height:3.6px;background:#fff"></div><div style="left:1529.3px;top:173.5px;width:3.6px;height:3.6px;background:#5f8fdc"></div><div style="left:1530.6px;top:183.6px;width:3.6px;height:3.6px;background:#fff"></div><div style="left:1529.3px;top:182.3px;width:3.6px;height:3.6px;background:#5f8fdc"></div><div style="left:1530.6px;top:192.5px;width:3.6px;height:3.6px;background:#fff"></div><div style="left:1529.3px;top:191.2px;width:3.6px;height:3.6px;background:#5f8fdc"></div><div style="left:1530.6px;top:201.4px;width:3.6px;height:3.6px;background:#fff"></div><div style="left:1529.3px;top:200.1px;width:3.6px;height:3.6px;background:#5f8fdc"></div><div style="left:1530.6px;top:210.3px;width:3.6px;height:3.6px;background:#fff"></div><div style="left:1529.3px;top:209.0px;width:3.6px;height:3.6px;background:#5f8fdc"></div>
<span class="t ts" style="left:1551.1px;top:177.0px;font-size:37.5px;color:#0b2a8f;transform:scaleX(1.0631);">Capture</span>
<div class="combo" style="left:1708.2px;top:164.2px;width:198.8px;height:65.2px;background:#fff"></div>
<div style="left:1849.3px;top:166.6px;width:55.1px;height:60.4px;background:linear-gradient(#d6e5fc,#c5dbfb 50%,#cfe2fd)"></div>
<svg class="ic" style="left:1866px;top:189px" width="22" height="14" viewBox="0 0 22 14"><path d="M1.5 1.6 L20.5 1.6 L11 12.2Z" fill="#4f78bb"/></svg>
<span class="t ts" style="left:1716.6px;top:180.0px;font-size:37.5px;color:#000;transform:scaleX(0.7375);">1</span>
<span class="t ts" style="left:1920.0px;top:177.0px;font-size:37.5px;color:#a3a3a3;transform:scaleX(0.9729);">Play</span>
<div style="left:2010.7px;top:168.7px;width:2.2px;height:56.5px;background:#6f9fe3"></div><div style="left:2012.9px;top:169.7px;width:1.8px;height:56.5px;background:#f3f8ff"></div>
<span class="t ts" style="left:2030.4px;top:177.0px;font-size:37.5px;color:#0b2a8f;transform:scaleX(0.9577);">Pass/Fail</span>
<div style="left:2207.8px;top:174.8px;width:3.6px;height:3.6px;background:#fff"></div><div style="left:2206.5px;top:173.5px;width:3.6px;height:3.6px;background:#5f8fdc"></div><div style="left:2207.8px;top:183.6px;width:3.6px;height:3.6px;background:#fff"></div><div style="left:2206.5px;top:182.3px;width:3.6px;height:3.6px;background:#5f8fdc"></div><div style="left:2207.8px;top:192.5px;width:3.6px;height:3.6px;background:#fff"></div><div style="left:2206.5px;top:191.2px;width:3.6px;height:3.6px;background:#5f8fdc"></div><div style="left:2207.8px;top:201.4px;width:3.6px;height:3.6px;background:#fff"></div><div style="left:2206.5px;top:200.1px;width:3.6px;height:3.6px;background:#5f8fdc"></div><div style="left:2207.8px;top:210.3px;width:3.6px;height:3.6px;background:#fff"></div><div style="left:2206.5px;top:209.0px;width:3.6px;height:3.6px;background:#5f8fdc"></div>
<svg class="ic" style="left:2229.5px;top:161.8px" width="68.5" height="67" viewBox="0 0 68 67"><rect x="0" y="0" width="68" height="67" rx="3.5" fill="url(#ig)"/><path d="M7 34 C9 6, 20 6, 23.5 32 C26 58, 34 58, 36.5 36" fill="none" stroke="#fff" stroke-width="4.6"/><path d="M37 26 L58 38 L37 48 Z" fill="#fff"/></svg>
<span class="t ts" style="left:2302.1px;top:177.0px;font-size:37.5px;color:#0b2a8f;transform:scaleX(0.9733);">DDS</span>
<div class="tabrow" style="left:0.0px;top:246.3px;width:3061.0px;height:74.0px;background:linear-gradient(#b1d2fa,#c4dcfb 45%,#deebfc)"></div>
<svg class="ic" style="left:0;top:250px" width="400" height="72" viewBox="0 250 400 72"><defs><linearGradient id="gy" x1="0" y1="0" x2="0" y2="1"><stop offset="0" stop-color="#fffda8"/><stop offset=".46" stop-color="#fff38c"/><stop offset=".56" stop-color="#ffdf7e"/><stop offset="1" stop-color="#ffd873"/></linearGradient></defs><path d="M-4 322 L60 256 Q63 253 68 253 L388 253 Q394 253 394 259 L394 322 Z" fill="url(#gy)" stroke="#fffef0" stroke-width="2"/><path d="M394.5 258 V322" stroke="#a9bdd6" stroke-width="1.6"/></svg>
<div class="tab" style="left:396.0px;top:252.5px;width:465.0px;height:69.5px;background:linear-gradient(#ebf9cb,#e6f6c3 45%,#c3d3a7 56%,#bfcfa3);border-radius:5px 5px 0 0;border-top:2px solid #f6fde6;border-right:2px solid #a9c4e6;box-sizing:border-box"></div>
<div class="tab" style="left:863.0px;top:251.5px;width:273.0px;height:70.5px;background:linear-gradient(#ffc6c6,#ffc1c1 46%,#f3a2a2 56%,#f09e9e);border-radius:5px 5px 0 0;border-top:3px solid #fff;border-right:2.5px solid #a9c4e6;box-sizing:border-box"></div>
<svg class="ic" style="left:72.8px;top:257.8px" width="53.3" height="52" viewBox="0 0 68 67"><rect x="0" y="0" width="68" height="67" rx="3.5" fill="url(#ig)"/><path d="M7.5 50 C11 36, 15 10.5, 19.5 10.5 C24 10.5, 26.5 30, 30 48 C31.5 40, 35 35, 38 36.5 L42.5 46 C44 41, 47.5 39, 49.5 41 L54 47.5 C55.5 44.5, 58 43.5, 59.5 45.5 L63 51" fill="none" stroke="#fff" stroke-width="4.6" stroke-linejoin="round" stroke-linecap="round"/></svg>
<svg class="ic" style="left:413.7px;top:257.3px" width="54" height="52.7" viewBox="0 0 68 67"><rect x="0" y="0" width="68" height="67" rx="3.5" fill="url(#ig)"/><path d="M7.5 50 C11 36, 15 10.5, 19.5 10.5 C24 10.5, 26.5 30, 30 48 C31.5 40, 35 35, 38 36.5 L42.5 46 C44 41, 47.5 39, 49.5 41 L54 47.5 C55.5 44.5, 58 43.5, 59.5 45.5 L63 51" fill="none" stroke="#fff" stroke-width="4.6" stroke-linejoin="round" stroke-linecap="round"/></svg>
<svg class="ic" style="left:879.0px;top:257.3px" width="55.3" height="52.7" viewBox="0 0 68 67"><rect x="0" y="0" width="68" height="67" rx="3.5" fill="url(#ig)"/><g fill="none" stroke="#fff" stroke-width="6"><ellipse cx="34" cy="33.5" rx="29" ry="6.2" transform="rotate(45 34 33.5)"/><ellipse cx="34" cy="33.5" rx="29" ry="6.2" transform="rotate(-45 34 33.5)"/></g></svg>
<span class="t ts" style="left:144.6px;top:269.0px;font-size:37.5px;color:#000;font-weight:700;transform:scaleX(0.9713);">Oscilloscope</span>
<span class="t ts" style="left:494.9px;top:268.0px;font-size:37.5px;color:#000;transform:scaleX(1.0503);">Spectrum Analyzer</span>
<span class="t ts" style="left:953.0px;top:268.0px;font-size:37.5px;color:#000;transform:scaleX(0.9855);">Lissajous</span>
<div style="left:0.0px;top:319.6px;width:3061.0px;height:4.2px;background:linear-gradient(#9a9a9a,#6f6f6f 55%,#8a8a8a)"></div>
<div style="left:0.0px;top:323.8px;width:3061.0px;height:4.4px;background:linear-gradient(#fff,#f4f7ff)"></div>
<div style="left:0.0px;top:328.2px;width:3061.0px;height:3.2px;background:linear-gradient(#ffc879,#ffb14a)"></div>
<div style="left:0.0px;top:2217.0px;width:3061.0px;height:2.4px;background:#272c31"></div>
<div style="left:0.0px;top:2219.2px;width:3061.0px;height:2.9px;background:linear-gradient(#f2ac4e,#ffc878)"></div>
<div style="left:0.0px;top:2222.0px;width:3061.0px;height:6.2px;background:linear-gradient(#eef2f9,#e1e1e1)"></div>
<div style="left:0.0px;top:2228.0px;width:3061.0px;height:2.8px;background:#fff"></div>
<div style="left:0.0px;top:2230.7px;width:3061.0px;height:2.4px;background:#5b80b7"></div>
<div style="left:0.0px;top:2233.0px;width:3061.0px;height:2.6px;background:#fff"></div>
<div class="statusbar" style="left:0.0px;top:2235.5px;width:3061.0px;height:60.5px;background:linear-gradient(#d6e5fa,#c6daf7 21.4%,#b0cff5 21.6%,#bcd4f5 55%,#ccdef6)"></div>
<span class="t ts" style="left:-47.8px;top:2247.0px;font-size:37.5px;color:#15428b;transform:scaleX(0.9500);">Ready</span>
<div style="left:2907.2px;top:2236.0px;width:2.0px;height:60.0px;background:#9fbfe9"></div>
<div style="left:2909.2px;top:2236.0px;width:1.6px;height:60.0px;background:#f2f7ff"></div>
<span class="t ts" style="left:2913.7px;top:2248.0px;font-size:37.5px;color:#15428b;transform:scaleX(0.9500);">ISDS205A</span>
</div></body></html>
